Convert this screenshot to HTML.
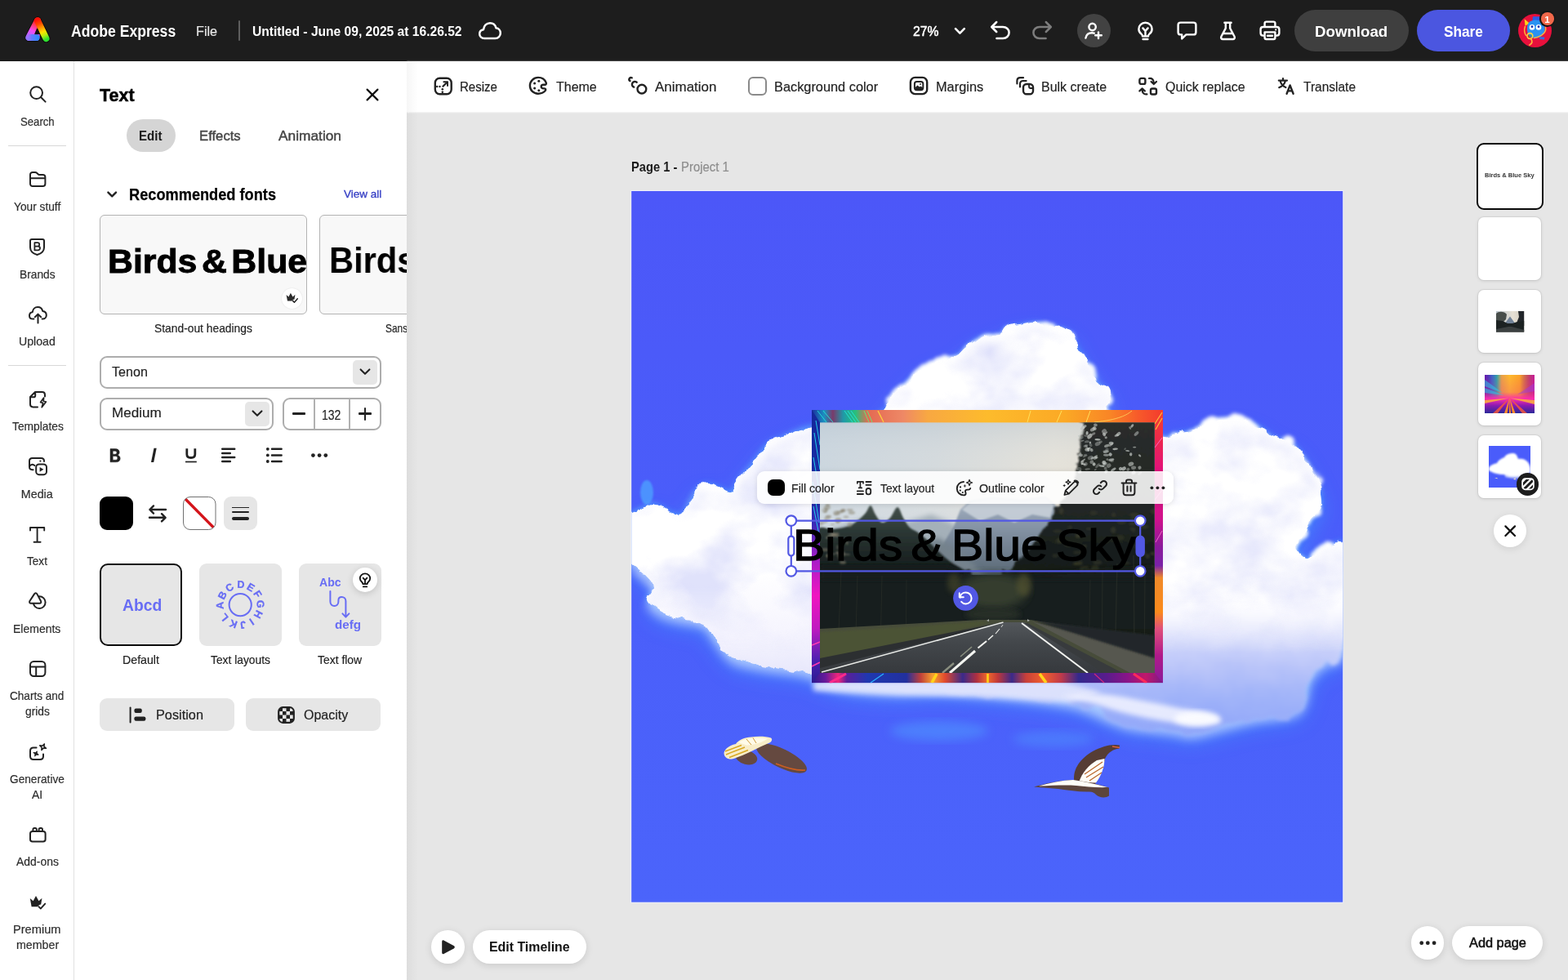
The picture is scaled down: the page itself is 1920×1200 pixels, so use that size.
<!DOCTYPE html>
<html lang="en">
<head>
<meta charset="utf-8">
<title>Adobe Express</title>
<style>
*{box-sizing:border-box;margin:0;padding:0}
html,body{width:1920px;height:1200px;overflow:hidden;background:#e6e6e6}
body{position:relative;font-family:"Liberation Sans",sans-serif;color:#222;-webkit-font-smoothing:antialiased}
#app{position:absolute;left:0;top:0;width:1920px;height:1200px;overflow:hidden;will-change:transform}
#app>div,#app>svg,#app>span,.abs{position:absolute}
.g{position:absolute;left:0;top:0;width:0;height:0;display:block}
.g>div,.g>svg,.g>span{position:absolute}
div div,div svg,div span{position:absolute}
.t{position:absolute;white-space:pre;transform-origin:0 50%;display:block}
svg{overflow:visible;display:block}
.ic{fill:none;stroke:#222;stroke-linecap:round;stroke-linejoin:round}
.icw{fill:none;stroke:#fff;stroke-linecap:round;stroke-linejoin:round}

</style>
</head>
<body>
<div id="app">
<div class="g backdrop">
<div style="left:0px;top:75px;width:91px;height:1125px;background:#fff;border-right:1px solid #e1e1e1"></div>
<div style="left:91px;top:75px;width:407px;height:1125px;background:#fff"></div>
</div>
<header class="g topbar">
<div style="left:0px;top:0px;width:1920px;height:75px;background:#1d1d1d"></div>
<svg style="left:0;top:0" width="80" height="75" viewBox="0 0 80 75">
<defs>
<linearGradient id="lgL" gradientUnits="userSpaceOnUse" x1="46" y1="24" x2="34" y2="48"><stop offset="0" stop-color="#ff1a12"/><stop offset="0.3" stop-color="#ff3a6a"/><stop offset="0.55" stop-color="#f64af0"/><stop offset="0.8" stop-color="#b866ff"/><stop offset="1" stop-color="#8f74ff"/></linearGradient>
<linearGradient id="lgBm" gradientUnits="userSpaceOnUse" x1="33" y1="46" x2="46" y2="46"><stop offset="0" stop-color="#a06cff"/><stop offset="0.45" stop-color="#5f7dff"/><stop offset="1" stop-color="#2a8cff"/></linearGradient>
<linearGradient id="lgR" gradientUnits="userSpaceOnUse" x1="46" y1="24" x2="57" y2="48"><stop offset="0" stop-color="#ff1208"/><stop offset="0.22" stop-color="#ff4a00"/><stop offset="0.42" stop-color="#ff9a00"/><stop offset="0.62" stop-color="#ffe000"/><stop offset="0.8" stop-color="#b8ee10"/><stop offset="1" stop-color="#2fe030"/></linearGradient>
</defs>
<g fill="none" stroke-linecap="round" stroke-linejoin="round">
<path d="M46 25.400 L35.400 46 L44.400 46 Z" stroke="#0c0c0c" stroke-width="10" fill="#0c0c0c"/>
<path d="M46 25.400 L56.400 47" stroke="#0c0c0c" stroke-width="10"/>
<path d="M46 25.400 L35.400 46 L44.400 46 Z" stroke="url(#lgL)" stroke-width="8.200" fill="url(#lgL)"/>
<path d="M36.400 46 L44.400 46" stroke="url(#lgBm2)" stroke-width="8.200"/>
<path d="M50.400 34.600 L56.400 47" stroke="#0c0c0c" stroke-width="9.800"/>
<path d="M46 25.400 L56.400 47" stroke="url(#lgR)" stroke-width="8.200"/>
</g>
<path d="M45.500 35 L42.700 41.600 L48.400 41.600 Z" fill="#101010" stroke="#101010" stroke-width="1" stroke-linejoin="round"/>
<defs><linearGradient id="lgBm2" gradientUnits="userSpaceOnUse" x1="33" y1="46" x2="47" y2="46"><stop offset="0" stop-color="#8f74ff" stop-opacity="0"/><stop offset="0.4" stop-color="#5f7dff" stop-opacity="0.9"/><stop offset="1" stop-color="#2a8cff"/></linearGradient></defs>
</svg>
<span class="t" style="left:86.70px;top:28.72px;font-size:19.5px;line-height:19.5px;font-weight:700;color:#fff;transform:scaleX(0.9028);">Adobe Express</span>
<span class="t" style="left:240.37px;top:29.91px;font-size:17.4px;line-height:17.4px;color:#e8e8e8;transform:scaleX(0.9298);-webkit-text-stroke:0.18px #e8e8e8;">File</span>
<div style="left:291.5px;top:25px;width:2px;height:25px;background:#5e5e5e;border-radius:1px"></div>
<span class="t" style="left:309.40px;top:30.80px;font-size:16px;line-height:16px;font-weight:700;color:#fff;transform:scaleX(0.9744);">Untitled - June 09, 2025 at 16.26.52</span>
<svg style="left:586px;top:26px;" width="28" height="23" viewBox="0 0 28 23"><path class="icw" d="M7.2 21 C3.6 21 1.2 18.6 1.2 15.6 C1.2 12.8 3.2 10.6 6 10.2 C6.4 5.4 9.8 2.2 14 2.2 C17.6 2.2 20.6 4.6 21.4 8.2 C24.6 8.6 26.8 11.2 26.8 14.4 C26.8 18 24 21 20.4 21 Z" stroke-width="2.5"/></svg>
<span class="t" style="left:1117.90px;top:30.80px;font-size:16px;line-height:16px;color:#fff;transform:scaleX(0.9844);-webkit-text-stroke:0.5px #fff;">27%</span>
<svg style="left:1168px;top:32.6px;" width="15" height="11" viewBox="0 0 15 11"><path class="icw" d="M2 2.2 L7.4 7.6 L12.8 2.2" stroke-width="2.6"/></svg>
<svg style="left:1212px;top:25px;" width="26" height="24" viewBox="0 0 26 24"><path class="icw" d="M8.2 2 L2.2 8 L8.2 14 M2.8 8 L16 8 C20.4 8 23.6 11 23.6 15 C23.6 19 20.4 22 16 22 L8.4 22" stroke-width="2.5"/></svg>
<svg style="left:1263px;top:25px;" width="26" height="24" viewBox="0 0 26 24"><path class="icw" d="M17.8 2 L23.8 8 L17.8 14 M23.2 8 L10 8 C5.6 8 2.4 11 2.4 15 C2.4 19 5.6 22 10 22 L17.6 22" style="stroke:#7d7d7d" stroke-width="2.5"/></svg>
<div style="left:1318.5px;top:17px;width:41px;height:41px;background:#424242;border-radius:50%"></div>
<svg style="left:1327px;top:26px;" width="24" height="24" viewBox="0 0 24 24"><circle stroke-width="2.4" class="icw" cx="10.6" cy="7" r="4.2"/><path stroke-width="2.4" class="icw" d="M2.4 20.6 C3.2 16.4 6.4 14.2 10 14.2 C11 14.2 12 14.4 12.8 14.7 M18 13.4 L18 21 M14.2 17.2 L21.8 17.2"/></svg>
<svg style="left:1392px;top:26px;" width="21" height="24" viewBox="0 0 21 24"><path stroke-width="2.4" class="icw" d="M10.5 1.8 C5.8 1.8 2.4 5.2 2.4 9.4 C2.4 12.2 3.8 14.2 5.6 15.6 C6.6 16.4 7 17.4 7 18.4 L14 18.4 C14 17.4 14.4 16.4 15.4 15.6 C17.2 14.2 18.6 12.2 18.6 9.4 C18.6 5.2 15.2 1.8 10.5 1.8 Z M7.6 22 L13.4 22 M7.4 8.4 L10.5 12 L13.6 8.4 M10.5 12 L10.5 18"/></svg>
<svg style="left:1441px;top:26px;" width="25" height="23" viewBox="0 0 25 23"><path stroke-width="2.4" class="icw" d="M4.6 1.6 L20.4 1.6 C22.2 1.6 23.4 2.8 23.4 4.6 L23.4 13.4 C23.4 15.2 22.2 16.4 20.4 16.4 L11.4 16.4 L6.2 21.4 L6.2 16.4 L4.6 16.4 C2.8 16.4 1.6 15.2 1.6 13.4 L1.6 4.6 C1.6 2.8 2.8 1.6 4.6 1.6 Z"/></svg>
<svg style="left:1493px;top:26px;" width="21" height="24" viewBox="0 0 21 24"><path stroke-width="2.4" class="icw" d="M6.4 1.8 L14.6 1.8 M7.8 2 L7.8 8.6 L2.4 18.8 C1.6 20.4 2.6 22 4.4 22 L16.6 22 C18.4 22 19.4 20.4 18.6 18.8 L13.2 8.6 L13.2 2 M5 15 L16 15"/></svg>
<svg style="left:1542px;top:25px;" width="26" height="25" viewBox="0 0 26 25"><path stroke-width="2.4" class="icw" d="M6.6 8 L6.6 3.6 C6.6 2.4 7.4 1.6 8.6 1.6 L17.4 1.6 C18.6 1.6 19.4 2.4 19.4 3.6 L19.4 8 M6.4 18.6 L4.6 18.6 C2.8 18.6 1.6 17.4 1.6 15.6 L1.6 11 C1.6 9.2 2.8 8 4.6 8 L21.4 8 C23.2 8 24.4 9.2 24.4 11 L24.4 15.6 C24.4 17.4 23.2 18.6 21.4 18.6 L19.6 18.6 M6.6 14.4 L19.4 14.4 L19.4 21 C19.4 22.2 18.6 23 17.4 23 L8.6 23 C7.4 23 6.6 22.2 6.6 21 Z M10 18.8 L16 18.8"/><circle cx="20.2" cy="11.4" r="1.1" fill="#fff"/></svg>
<div style="left:1585px;top:12px;width:139.5px;height:51px;background:#3f3f3f;border-radius:26px"></div>
<span class="t" style="left:1610.03px;top:29.18px;font-size:19.2px;line-height:19.2px;font-weight:700;color:#fff;transform:scaleX(0.9739);">Download</span>
<div style="left:1734.5px;top:12px;width:114.5px;height:51px;background:#4b56e0;border-radius:26px"></div>
<span class="t" style="left:1767.50px;top:29.18px;font-size:19.2px;line-height:19.2px;font-weight:700;color:#fff;transform:scaleX(0.8983);">Share</span>
<svg style="left:1859px;top:17px;" width="41" height="41" viewBox="0 0 41 41"><defs><clipPath id="avc"><circle cx="20.5" cy="20.5" r="20.5"/></clipPath></defs>
<g clip-path="url(#avc)"><rect width="41" height="41" fill="#e8103c"/>
<path d="M7.600 6.200 L13.800 11.600 L8.600 14.800 Z" fill="#ffd21a"/>
<path d="M18 3.200 L26 3.200 L26.600 8.600 L17.200 8.600 Z" fill="#2f5ae6"/>
<path d="M11.400 14 C12.400 9.400 16.400 7.400 21.500 7.400 C27 7.400 31.400 10.400 32.400 15.400 C33.400 21 31 26 26.400 28.600 C22 30.600 16 30 13.400 27 C10.800 23.800 10.600 18 11.400 14 Z" fill="#2a92f2"/>
<path d="M26 28 L32.400 28.400 L32 31.400 L26.400 31 Z" fill="#3a6ae0"/>
<circle cx="17" cy="16.400" r="3.300" fill="#fff"/><circle cx="25" cy="16.400" r="3.300" fill="#fff"/>
<circle cx="17" cy="15.700" r="1.400" fill="#1430b0"/><circle cx="25" cy="15.700" r="1.400" fill="#1430b0"/>
<path d="M8.400 15.400 C7.200 19 7.600 23.400 9.600 26.400 M33.600 16.600 C34.600 22 30 27.400 19.600 29.600" fill="none" stroke="#ffb43a" stroke-width="1.500" stroke-linecap="round"/>
<circle cx="14.400" cy="27" r="3.400" fill="none" stroke="#ffd83a" stroke-width="1.600"/>
<path d="M13.400 25.600 V28 M15.600 25.600 V28" stroke="#4a9a3a" stroke-width="1" fill="none"/>
<path d="M15.400 30.400 C18 33.400 17.200 36.400 14 38" fill="none" stroke="#ffb43a" stroke-width="1.800" stroke-linecap="round"/>
</g></svg>
<div style="left:1885.2px;top:13.4px;width:19.2px;height:19.2px;background:#151515;border-radius:50%"></div>
<div style="left:1887px;top:15.2px;width:15.6px;height:15.6px;background:#f2684a;border-radius:50%"></div>
<span class="t" style="left:1891.30px;top:17.84px;font-size:11.6px;line-height:11.6px;font-weight:700;color:#fff;">1</span>
</header>
<nav class="g rail">
<div style="left:10px;top:178px;width:71px;height:1px;background:#d8d8d8"></div>
<div style="left:10px;top:447px;width:71px;height:1px;background:#d8d8d8"></div>
<svg style="left:34.5px;top:104.2px;" width="23" height="23" viewBox="0 0 23 23"><circle class="ic" cx="9.6" cy="9.6" r="7.4" stroke-width="2"/><path class="ic" d="M15 15 L20.6 20.6" stroke-width="2"/></svg>
<span class="t" style="left:24.50px;top:141.84px;font-size:14.3px;line-height:14.3px;color:#2c2c2c;transform:scaleX(0.9196);-webkit-text-stroke:0.18px #2c2c2c;">Search</span>
<svg style="left:34.5px;top:208.6px;" width="23" height="21" viewBox="0 0 23 21"><path class="ic" d="M2 6.6 L2 5 C2 3.2 3.2 2 5 2 L8 2 C9 2 9.6 2.3 10.3 3 L11.6 4.3 C12 4.7 12.4 4.9 13 4.9 L17.4 4.9 C19.2 4.9 20.4 6.1 20.4 7.9 L20.4 16 C20.4 17.8 19.2 19 17.4 19 L5 19 C3.2 19 2 17.8 2 16 Z M2.2 9.2 L20.2 9.2" stroke-width="2"/></svg>
<span class="t" style="left:17.20px;top:246.10px;font-size:14.3px;line-height:14.3px;color:#2c2c2c;transform:scaleX(0.9599);-webkit-text-stroke:0.18px #2c2c2c;">Your stuff</span>
<svg style="left:35.4px;top:291.2px;" width="21" height="23" viewBox="0 0 21 23"><path class="ic" d="M4 2 L17 2 C18.4 2 19 2.6 19 4 L19 12 C19 16.4 15.6 19.6 10.5 21 C5.4 19.6 2 16.4 2 12 L2 4 C2 2.6 2.6 2 4 2 Z" stroke-width="2"/><path class="ic" d="M7.4 6.2 H11 A2.2 2.2 0 0 1 11 10.6 H7.4 M7.4 10.6 H11.6 A2.4 2.4 0 0 1 11.6 15.4 H7.4 Z M7.4 6.2 V15.4" stroke-width="1.8"/></svg>
<span class="t" style="left:23.54px;top:328.60px;font-size:14.3px;line-height:14.3px;color:#2c2c2c;transform:scaleX(0.9615);-webkit-text-stroke:0.18px #2c2c2c;">Brands</span>
<svg style="left:33.5px;top:373.6px;" width="25" height="23" viewBox="0 0 25 23"><path class="ic" d="M7.4 16.6 L6.6 16.6 C3.8 16.6 2 14.8 2 12.4 C2 10.2 3.6 8.5 5.8 8.2 C6.2 4.6 8.8 2 12.2 2 C15.2 2 17.6 4 18.3 7 C21 7.3 22.8 9.4 22.8 12 C22.8 14.6 20.8 16.6 18.2 16.6 L17.6 16.6 M12.5 21.4 L12.5 11 M8.8 14.2 L12.5 10.6 L16.2 14.2" stroke-width="2"/></svg>
<span class="t" style="left:22.51px;top:410.75px;font-size:14.3px;line-height:14.3px;color:#2c2c2c;transform:scaleX(0.9897);-webkit-text-stroke:0.18px #2c2c2c;">Upload</span>
<svg style="left:34.5px;top:477.6px;" width="24" height="23" viewBox="0 0 24 23"><path class="ic" d="M11 20.4 L5.4 20.4 C3.4 20.4 2 19 2 17 L2 8 L8 2 L16.6 2 C18.6 2 20 3.4 20 5.4 L20 7.6 M2.4 8.2 L6.4 8.2 C7.6 8.2 8.2 7.6 8.2 6.4 L8.2 2.4" stroke-width="2"/><path class="ic" d="M18.6 9 L14.6 14.6 L17.6 15.4 L16.2 20.6 L21.4 14 L18.2 13.2 Z" stroke-width="1.7"/></svg>
<span class="t" style="left:14.50px;top:514.85px;font-size:14.3px;line-height:14.3px;color:#2c2c2c;transform:scaleX(0.9645);-webkit-text-stroke:0.18px #2c2c2c;">Templates</span>
<svg style="left:33.5px;top:559.4px;" width="25" height="24" viewBox="0 0 25 24"><path class="ic" d="M6.6 16.2 L5.6 16.2 C3.4 16.2 2 14.8 2 12.6 L2 5.6 C2 3.4 3.4 2 5.6 2 L16.4 2 C18.6 2 20 3.4 20 5.6 L20 6 M2.4 11.6 C4.2 9.2 6.4 9 8.4 11" stroke-width="2"/><rect class="ic" x="10.2" y="9.4" width="12.8" height="12.8" rx="3.6" stroke-width="2"/><path d="M14.6 12.9 L19.4 15.8 L14.6 18.7 Z" fill="#222"/><circle cx="15.4" cy="5.6" r="1.1" fill="#222"/></svg>
<span class="t" style="left:25.80px;top:597.85px;font-size:14.3px;line-height:14.3px;color:#2c2c2c;-webkit-text-stroke:0.18px #2c2c2c;">Media</span>
<svg style="left:35px;top:643.5px;" width="21" height="22" viewBox="0 0 21 22"><path class="ic" d="M2 5.6 L2 2 L19.2 2 L19.2 5.6 M10.6 2.2 L10.6 19.6 M6.6 19.8 L14.6 19.8" stroke-width="1.9"/></svg>
<span class="t" style="left:33.25px;top:680.14px;font-size:14.3px;line-height:14.3px;color:#2c2c2c;transform:scaleX(0.9506);-webkit-text-stroke:0.18px #2c2c2c;">Text</span>
<svg style="left:33.5px;top:724.2px;" width="24" height="23" viewBox="0 0 24 23"><circle class="ic" cx="14.2" cy="13.6" r="7.4" stroke-width="2"/><path d="M8 3.4 C8.8 1.8 10.6 1.8 11.4 3.4 L16 12 C16.8 13.6 16 14.8 14.4 14.8 L4 14.8 C2.4 14.8 1.6 13.6 2.4 12 Z" fill="#fff" stroke="#222" stroke-width="2" stroke-linejoin="round"/></svg>
<span class="t" style="left:16.22px;top:763.10px;font-size:14.3px;line-height:14.3px;color:#2c2c2c;transform:scaleX(0.9795);-webkit-text-stroke:0.18px #2c2c2c;">Elements</span>
<svg style="left:34.5px;top:808px;" width="23" height="22" viewBox="0 0 23 22"><rect class="ic" x="2" y="2" width="18.4" height="18" rx="4.4" stroke-width="2"/><path class="ic" d="M2.2 8.6 L20.2 8.6 M9.2 8.8 L9.2 19.8" stroke-width="2"/></svg>
<span class="t" style="left:12.25px;top:845.35px;font-size:14.3px;line-height:14.3px;color:#2c2c2c;transform:scaleX(0.9495);-webkit-text-stroke:0.18px #2c2c2c;">Charts and</span>
<span class="t" style="left:30.70px;top:863.85px;font-size:14.3px;line-height:14.3px;color:#2c2c2c;transform:scaleX(0.9663);-webkit-text-stroke:0.18px #2c2c2c;">grids</span>
<svg style="left:34.5px;top:908.5px;" width="24" height="23" viewBox="0 0 24 23"><path class="ic" d="M9.6 6.4 L6 6.4 C3.6 6.4 2 8 2 10.4 L2 17 C2 19.4 3.6 21 6 21 L14 21 C16.4 21 18 19.4 18 17 L18 14.4" stroke-width="2"/><path class="ic" d="M17.600 1.600 L18.600 4.600 L21.800 5.600 L18.600 6.800 L17.600 9.800 L16.400 6.800 L13.400 5.600 L16.400 4.600 Z" stroke-width="1.600" transform="rotate(24 17.600 5.700)"/><path d="M9 10.600 L9.900 13 L12.400 13.800 L9.900 14.700 L9 17.200 L8.100 14.700 L5.600 13.800 L8.100 13 Z" fill="#222" stroke="#222" stroke-width="0.900" stroke-linejoin="round" transform="rotate(24 9 13.900)"/></svg>
<span class="t" style="left:12.00px;top:947.35px;font-size:14.3px;line-height:14.3px;color:#2c2c2c;transform:scaleX(0.9567);-webkit-text-stroke:0.18px #2c2c2c;">Generative</span>
<span class="t" style="left:39.25px;top:965.85px;font-size:14.3px;line-height:14.3px;color:#2c2c2c;transform:scaleX(0.9772);-webkit-text-stroke:0.18px #2c2c2c;">AI</span>
<svg style="left:34.5px;top:1012.2px;" width="23" height="21" viewBox="0 0 23 21"><path class="ic" d="M5.4 6 L5.4 3.8 C5.4 2.6 6 2 7.2 2 L8 2 C9.2 2 9.8 2.6 9.8 3.8 L9.8 6 M12.6 6 L12.6 3.8 C12.6 2.6 13.2 2 14.4 2 L15.2 2 C16.4 2 17 2.6 17 3.8 L17 6" stroke-width="1.9"/><rect class="ic" x="2" y="6" width="18.6" height="12.6" rx="2.8" stroke-width="2"/></svg>
<span class="t" style="left:19.75px;top:1048.35px;font-size:14.3px;line-height:14.3px;color:#2c2c2c;transform:scaleX(0.9736);-webkit-text-stroke:0.18px #2c2c2c;">Add-ons</span>
<svg style="left:36px;top:1096px;" width="21" height="19" viewBox="0 0 21 19"><path d="M0.800 4 L4.600 7.200 L8 1 L11.500 7.200 L15.400 3.800 L14.200 11.600 C12.200 11.900 10.800 12.900 10.200 14.300 H2.600 Z" fill="#222"/><path class="ic" d="M11.400 14.200 L13.800 16.600 L19.200 10.600" stroke-width="1.900"/></svg>
<span class="t" style="left:16.18px;top:1130.85px;font-size:14.3px;line-height:14.3px;color:#2c2c2c;transform:scaleX(1.0220);-webkit-text-stroke:0.18px #2c2c2c;">Premium</span>
<span class="t" style="left:19.50px;top:1149.60px;font-size:14.3px;line-height:14.3px;color:#2c2c2c;transform:scaleX(0.9948);-webkit-text-stroke:0.18px #2c2c2c;">member</span>
</nav>
<aside class="g text-panel">
<span class="t" style="left:122.30px;top:106.71px;font-size:21.4px;line-height:21.4px;font-weight:700;color:#000;transform:scaleX(1.0031);-webkit-text-stroke:0.5px #000;">Text</span>
<svg style="left:448px;top:107.5px;" width="16" height="16" viewBox="0 0 16 16"><path class="ic" d="M1.6 1.6 L14.4 14.4 M14.4 1.6 L1.6 14.4" stroke-width="2.2" style="stroke:#111"/></svg>
<div style="left:155px;top:146.3px;width:59.5px;height:40px;background:#d5d5d5;border-radius:20px"></div>
<span class="t" style="left:170.09px;top:159.19px;font-size:16.6px;line-height:16.6px;font-weight:700;color:#1a1a1a;transform:scaleX(0.9087);">Edit</span>
<span class="t" style="left:244.29px;top:159.19px;font-size:16.6px;line-height:16.6px;color:#464646;transform:scaleX(1.0056);-webkit-text-stroke:0.45px #464646;">Effects</span>
<span class="t" style="left:341.25px;top:159.19px;font-size:16.6px;line-height:16.6px;color:#464646;transform:scaleX(1.0434);-webkit-text-stroke:0.45px #464646;">Animation</span>
<svg style="left:130px;top:232.6px;" width="15" height="11" viewBox="0 0 15 11"><path class="ic" d="M2.4 2.6 L7.2 7.400 L12 2.600" stroke-width="2.4"/></svg>
<span class="t" style="left:157.67px;top:228.84px;font-size:19.6px;line-height:19.6px;font-weight:700;color:#000;transform:scaleX(0.9290);-webkit-text-stroke:0.25px #000;">Recommended fonts</span>
<span class="t" style="left:421.00px;top:231.29px;font-size:13.3px;line-height:13.3px;color:#3b44c6;transform:scaleX(1.0126);-webkit-text-stroke:0.35px #3b44c6;">View all</span>
<div style="left:122px;top:263px;width:254px;height:122px;background:#f8f8f8;border-radius:6px"></div>
<span class="t" style="left:132.49px;top:300.07px;font-size:40.5px;line-height:40.5px;font-weight:700;color:#000;transform:scaleX(1.0564);-webkit-text-stroke:0.9px #000;word-spacing:-6px;">Birds &amp; Blue Sky</span>
<div style="left:376px;top:263px;width:15.5px;height:122px;background:#fff"></div>
<div style="left:122px;top:263px;width:254px;height:122px;border:1px solid #b3b3b3;border-radius:6px"></div>
<div style="left:344.5px;top:353px;width:25px;height:25px;background:#fff;border-radius:50%;box-shadow:0 0 2px rgba(0,0,0,0.12)"></div>
<svg style="left:349.5px;top:358.4px;" width="16" height="14" viewBox="0 0 16 14"><path d="M0.600 3 L3.400 5.400 L5.900 0.800 L8.500 5.400 L11.400 2.800 L10.500 8.600 C9 8.800 8 9.600 7.600 10.600 H2 Z" fill="#2c2c2c"/><path class="ic" d="M8.600 10.400 L10.400 12.200 L14.300 7.800" stroke-width="1.500"/></svg>
<div style="left:391px;top:263px;width:254px;height:122px;background:#f8f8f8;border:1px solid #b3b3b3;border-radius:6px"></div>
<span class="t" style="left:403.32px;top:297.05px;font-size:44.3px;line-height:44.3px;font-weight:700;color:#000;transform:scaleX(0.9398);">Birds &amp; Blue Sky</span>
<span class="t" style="left:189.00px;top:395.35px;font-size:14.3px;line-height:14.3px;transform:scaleX(0.9669);-webkit-text-stroke:0.18px #222;">Stand-out headings</span>
<span class="t" style="left:472.00px;top:395.35px;font-size:14.3px;line-height:14.3px;transform:scaleX(0.8323);-webkit-text-stroke:0.18px #222;">Sans-serif body</span>
<div style="left:122px;top:436px;width:345px;height:40px;border:2.2px solid #adadad;border-radius:9px;background:#fff"></div>
<span class="t" style="left:137.20px;top:446.86px;font-size:16.4px;line-height:16.4px;transform:scaleX(0.9834);-webkit-text-stroke:0.18px #222;">Tenon</span>
<div style="left:432px;top:441px;width:30px;height:30px;background:#e6e6e6;border-radius:5px"></div>
<svg style="left:440px;top:450px;" width="14" height="11" viewBox="0 0 14 11"><path class="ic" d="M1.6 2.4 L7 7.8 L12.4 2.4" stroke-width="2.1"/></svg>
<div style="left:122px;top:486.5px;width:213px;height:40px;border:2.2px solid #adadad;border-radius:9px;background:#fff"></div>
<span class="t" style="left:136.86px;top:497.46px;font-size:16.4px;line-height:16.4px;transform:scaleX(1.0434);-webkit-text-stroke:0.18px #222;">Medium</span>
<div style="left:300px;top:491.5px;width:30px;height:30px;background:#e6e6e6;border-radius:5px"></div>
<svg style="left:308px;top:500.5px;" width="14" height="11" viewBox="0 0 14 11"><path class="ic" d="M1.6 2.4 L7 7.8 L12.4 2.4" stroke-width="2.1"/></svg>
<div style="left:345.5px;top:486.5px;width:121.5px;height:40px;border:2.2px solid #adadad;border-radius:9px;background:#fff"></div>
<div style="left:384px;top:488px;width:2px;height:37px;background:#b1b1b1"></div>
<div style="left:426.8px;top:488px;width:2px;height:37px;background:#b1b1b1"></div>
<div style="left:357.8px;top:505.4px;width:16px;height:2.2px;background:#222;border-radius:1px"></div>
<span class="t" style="left:394.09px;top:500.28px;font-size:17.2px;line-height:17.2px;transform:scaleX(0.8150);-webkit-text-stroke:0.18px #222;">132</span>
<div style="left:439.3px;top:505.4px;width:16px;height:2.2px;background:#222;border-radius:1px"></div>
<div style="left:446.2px;top:498.5px;width:2.2px;height:16px;background:#222;border-radius:1px"></div>
<svg style="left:133px;top:548px;" width="17" height="19" viewBox="0 0 17 19"><path d="M2 1.6 H8.2 C11.4 1.6 13.2 3.2 13.2 5.8 C13.2 7.6 12.2 8.8 10.8 9.3 C12.8 9.7 14.2 11.2 14.2 13.4 C14.2 16.2 12.2 17.8 8.8 17.8 H2 Z M5.2 4.2 V8.2 H7.8 C9.2 8.2 10 7.5 10 6.2 C10 4.9 9.2 4.2 7.8 4.2 Z M5.2 10.6 V15.2 H8.4 C10 15.2 10.9 14.4 10.9 12.9 C10.9 11.4 10 10.6 8.4 10.6 Z" fill="#222" fill-rule="evenodd" stroke="#222" stroke-width="0.5" stroke-linejoin="round"/></svg>
<svg style="left:184px;top:548px;" width="9" height="19" viewBox="0 0 9 19"><path d="M4.500 0.800 H7.700 L4.200 18 H1 Z" fill="#222"/></svg>
<svg style="left:226px;top:548px;" width="16" height="19" viewBox="0 0 16 19"><path class="ic" d="M2.8 1.2 V8.2 C2.8 10.900 4.700 12.500 7.800 12.500 C10.900 12.500 12.800 10.900 12.800 8.200 V1.200" stroke-width="2.8" style="stroke-linecap:butt"/><path d="M1 17.500 H14.800" stroke="#222" stroke-width="1.700" fill="none"/></svg>
<svg style="left:270px;top:548px;" width="19" height="19" viewBox="0 0 19 19"><path class="ic" d="M2.200 1.800 H17.200 M2.200 6.900 H11.800 M2.200 12 H17.200 M2.200 17 H11.800" stroke-width="2.500"/></svg>
<svg style="left:325px;top:548px;" width="22" height="19" viewBox="0 0 22 19"><path class="ic" d="M8 1.800 H19.600 M8 9.400 H19.600 M8 17 H19.600" stroke-width="2.500"/><circle cx="2.800" cy="1.800" r="1.900" fill="#222"/><circle cx="2.800" cy="9.400" r="1.900" fill="#222"/><circle cx="2.800" cy="17" r="1.900" fill="#222"/></svg>
<svg style="left:381px;top:555px;" width="21" height="5" viewBox="0 0 21 5"><circle cx="2.400" cy="2.600" r="2.400" fill="#222"/><circle cx="10.100" cy="2.600" r="2.400" fill="#222"/><circle cx="17.800" cy="2.600" r="2.400" fill="#222"/></svg>
<div style="left:122px;top:608px;width:40.5px;height:41px;background:#000;border-radius:9px"></div>
<svg style="left:181px;top:617px;" width="24" height="23" viewBox="0 0 24 23"><path class="ic" d="M22 7 H2.6 M7 2.4 L2.4 7 L7 11.6 M2 16.8 H21.4 M17 12.2 L21.6 16.8 L17 21.4" stroke-width="2.4"/></svg>
<svg style="left:223.5px;top:608px;" width="40.5" height="41" viewBox="0 0 40.5 41"><defs><clipPath id="ncc"><rect x="0.5" y="0.5" width="39.5" height="40" rx="8.5"/></clipPath></defs><rect x="0.5" y="0.5" width="39.5" height="40" rx="8.5" fill="#fff"/><path d="M1.5 1.5 L39 39.5" stroke="#d4141a" stroke-width="3.4" clip-path="url(#ncc)"/><rect x="0.5" y="0.5" width="39.5" height="40" rx="8.5" fill="none" stroke="#707070" stroke-width="1"/></svg>
<div style="left:274.3px;top:608px;width:40.5px;height:41px;background:#e6e6e6;border-radius:9px"></div>
<div style="left:284.4px;top:621.4px;width:20.2px;height:1.1px;background:#222"></div>
<div style="left:284.4px;top:626.3px;width:20.2px;height:2.1px;background:#222;border-radius:1px"></div>
<div style="left:284.4px;top:633px;width:20.2px;height:4.2px;background:#222;border-radius:2.1px"></div>
<div style="left:122px;top:689.5px;width:101.2px;height:101px;background:#e6e6e6;border:2.7px solid #0d0d0d;border-radius:10px"></div>
<span class="t" style="left:149.50px;top:729.95px;font-size:21px;line-height:21px;font-weight:700;color:#686df4;transform:scaleX(0.9212);">Abcd</span>
<div style="left:244.2px;top:689.5px;width:101px;height:101px;background:#e6e6e6;border-radius:9px"></div>
<svg style="left:244.2px;top:689.5px;" width="101" height="101" viewBox="0 0 101 101"><circle cx="50.2" cy="50.6" r="13.6" fill="none" stroke="#686df4" stroke-width="2"/><text transform="translate(50.2,50.6) rotate(2) translate(0,-20.6)" text-anchor="middle" style="font:700 12.6px 'Liberation Sans',sans-serif" fill="#686df4" stroke="#686df4" stroke-width="0.3">D</text><text transform="translate(50.2,50.6) rotate(31) translate(0,-20.6)" text-anchor="middle" style="font:700 12.6px 'Liberation Sans',sans-serif" fill="#686df4" stroke="#686df4" stroke-width="0.3">E</text><text transform="translate(50.2,50.6) rotate(58) translate(0,-20.6)" text-anchor="middle" style="font:700 12.6px 'Liberation Sans',sans-serif" fill="#686df4" stroke="#686df4" stroke-width="0.3">F</text><text transform="translate(50.2,50.6) rotate(88) translate(0,-20.6)" text-anchor="middle" style="font:700 12.6px 'Liberation Sans',sans-serif" fill="#686df4" stroke="#686df4" stroke-width="0.3">G</text><text transform="translate(50.2,50.6) rotate(118) translate(0,-20.6)" text-anchor="middle" style="font:700 12.6px 'Liberation Sans',sans-serif" fill="#686df4" stroke="#686df4" stroke-width="0.3">H</text><text transform="translate(50.2,50.6) rotate(146) translate(0,-20.6)" text-anchor="middle" style="font:700 12.6px 'Liberation Sans',sans-serif" fill="#686df4" stroke="#686df4" stroke-width="0.3">I</text><text transform="translate(50.2,50.6) rotate(172) translate(0,-20.6)" text-anchor="middle" style="font:700 12.6px 'Liberation Sans',sans-serif" fill="#686df4" stroke="#686df4" stroke-width="0.3">J</text><text transform="translate(50.2,50.6) rotate(200) translate(0,-20.6)" text-anchor="middle" style="font:700 12.6px 'Liberation Sans',sans-serif" fill="#686df4" stroke="#686df4" stroke-width="0.3">K</text><text transform="translate(50.2,50.6) rotate(232) translate(0,-20.6)" text-anchor="middle" style="font:700 12.6px 'Liberation Sans',sans-serif" fill="#686df4" stroke="#686df4" stroke-width="0.3">L</text><text transform="translate(50.2,50.6) rotate(268) translate(0,-20.6)" text-anchor="middle" style="font:700 12.6px 'Liberation Sans',sans-serif" fill="#686df4" stroke="#686df4" stroke-width="0.3">A</text><text transform="translate(50.2,50.6) rotate(298) translate(0,-20.6)" text-anchor="middle" style="font:700 12.6px 'Liberation Sans',sans-serif" fill="#686df4" stroke="#686df4" stroke-width="0.3">B</text><text transform="translate(50.2,50.6) rotate(328) translate(0,-20.6)" text-anchor="middle" style="font:700 12.6px 'Liberation Sans',sans-serif" fill="#686df4" stroke="#686df4" stroke-width="0.3">C</text></svg>
<div style="left:365.8px;top:689.5px;width:101.2px;height:101px;background:#e6e6e6;border-radius:9px"></div>
<span class="t" style="left:391.40px;top:705.21px;font-size:15.4px;line-height:15.4px;font-weight:700;color:#686df4;transform:scaleX(0.9114);">Abc</span>
<span class="t" style="left:410.30px;top:756.91px;font-size:15.4px;line-height:15.4px;font-weight:700;color:#686df4;transform:scaleX(0.9849);">defg</span>
<svg style="left:400px;top:720px;" width="30" height="40" viewBox="0 0 30 40"><path d="M4.4 4 V16.6 C4.4 20 6.6 22 9.4 22 C12.2 22 14.4 20 14.4 16.6 V15 C14.4 12.6 16 11 18.4 11 C21 11 23.4 12.8 23.4 16 V34.6 M19.4 31.4 L23.4 35.6 L27.4 31.4" fill="none" stroke="#686df4" stroke-width="2" stroke-linecap="round" stroke-linejoin="round"/></svg>
<div style="left:431.5px;top:694.5px;width:30.8px;height:30.8px;background:#fff;border-radius:50%;box-shadow:0 2px 8px rgba(0,0,0,0.16)"></div>
<svg style="left:439px;top:700.5px;" width="16" height="20" viewBox="0 0 16 20"><path class="ic" d="M8 1.4 C4.4 1.4 1.8 4 1.8 7.2 C1.8 9.4 2.9 10.9 4.3 12 C5 12.6 5.4 13.4 5.4 14.2 L10.6 14.2 C10.6 13.4 11 12.6 11.7 12 C13.1 10.9 14.2 9.4 14.2 7.2 C14.2 4 11.6 1.4 8 1.4 Z M5.8 17.4 L10.2 17.4 M5.6 6.6 L8 9.4 L10.4 6.6 M8 9.4 L8 14" stroke-width="1.8" style="stroke:#111"/></svg>
<span class="t" style="left:149.93px;top:800.69px;font-size:14.6px;line-height:14.6px;transform:scaleX(0.9716);-webkit-text-stroke:0.18px #222;">Default</span>
<span class="t" style="left:258.40px;top:800.69px;font-size:14.6px;line-height:14.6px;transform:scaleX(0.9458);-webkit-text-stroke:0.18px #222;">Text layouts</span>
<span class="t" style="left:389.40px;top:800.69px;font-size:14.6px;line-height:14.6px;transform:scaleX(0.9540);-webkit-text-stroke:0.18px #222;">Text flow</span>
<div style="left:122px;top:854.8px;width:165px;height:40.2px;background:#e6e6e6;border-radius:9px"></div>
<svg style="left:158px;top:865px;" width="21" height="21" viewBox="0 0 21 21"><path class="ic" d="M1.6 1.4 V19.6" stroke-width="2"/><rect x="6.4" y="2.6" width="9.4" height="5.4" rx="2.2" fill="#222"/><rect x="6.4" y="12.4" width="14" height="5.4" rx="2.2" fill="#222"/></svg>
<span class="t" style="left:190.64px;top:866.85px;font-size:17px;line-height:17px;transform:scaleX(0.9589);-webkit-text-stroke:0.18px #222;">Position</span>
<div style="left:301.3px;top:854.8px;width:165px;height:40.2px;background:#e6e6e6;border-radius:9px"></div>
<svg style="left:339.6px;top:864.8px;" width="21" height="21" viewBox="0 0 21 21"><defs><clipPath id="opc"><rect x="1" y="1" width="19" height="19" rx="5"/></clipPath></defs><g clip-path="url(#opc)"><rect x="1.5" y="1.5" width="4.5" height="4.5" fill="#222"/><rect x="1.5" y="10.5" width="4.5" height="4.5" fill="#222"/><rect x="6.0" y="6.0" width="4.5" height="4.5" fill="#222"/><rect x="6.0" y="15.0" width="4.5" height="4.5" fill="#222"/><rect x="10.5" y="1.5" width="4.5" height="4.5" fill="#222"/><rect x="10.5" y="10.5" width="4.5" height="4.5" fill="#222"/><rect x="15.0" y="6.0" width="4.5" height="4.5" fill="#222"/><rect x="15.0" y="15.0" width="4.5" height="4.5" fill="#222"/></g><rect class="ic" x="1.2" y="1.2" width="18.6" height="18.6" rx="5" stroke-width="2.2"/></svg>
<span class="t" style="left:372.00px;top:866.85px;font-size:17px;line-height:17px;transform:scaleX(0.9392);-webkit-text-stroke:0.18px #222;">Opacity</span>
</aside>
<section class="g canvas-toolbar">
<div style="left:498px;top:75px;width:1422px;height:1125px;background:linear-gradient(90deg,#dddddd 0,#e6e6e6 14px)"></div>
<div style="left:498px;top:75px;width:1422px;height:62px;background:linear-gradient(90deg,#f6f6f6 0,#fff 14px);box-shadow:0 0.5px 1.5px 0.5px rgba(255,255,255,0.8)"></div>
<svg style="left:530.5px;top:93.5px;" width="23.5" height="23" viewBox="0 0 23.5 23"><rect class="ic" x="1.8" y="1.7" width="19.9" height="19.5" rx="5.6" stroke-width="2.4"/><path class="ic" d="M11.4 11.8 L16 7.2" stroke-width="2.2"/><path d="M11.6 5.3 H17.2 C17.7 5.3 18 5.6 18 6.100 V11.700 L16.100 11.700 L16.100 8.600 L16.100 7.200 L11.600 7.200 Z" fill="#222"/><circle cx="4.2" cy="12" r="1.200" fill="#222"/><circle cx="7.5" cy="12" r="1.200" fill="#222"/><circle cx="10.800" cy="15.300" r="1.300" fill="#222"/><circle cx="10.800" cy="18.800" r="1.300" fill="#222"/></svg>
<span class="t" style="left:563.38px;top:97.84px;font-size:16.3px;line-height:16.3px;transform:scaleX(0.9238);-webkit-text-stroke:0.18px #222;">Resize</span>
<svg style="left:647px;top:93.2px;" width="24" height="24" viewBox="0 0 24 24"><path class="ic" d="M12 1.900 C6.400 1.900 1.900 6.300 1.900 11.900 C1.900 17.500 6.300 21.700 11.900 21.700 C15.400 21.700 18.700 20.300 20.700 18 C21.700 16.800 21.100 15.400 19.700 15.400 L18.500 15.400 C16.700 15.400 15.700 14.400 15.700 13 C15.700 11.600 16.700 10.700 18.300 10.700 L20.100 10.700 C21.500 10.700 22.300 9.700 21.700 8.300 C20.300 4.500 16.600 1.900 12 1.900 Z" stroke-width="2.4"/><circle cx="7.6" cy="8.900" r="1.500" fill="#222"/><circle cx="12.800" cy="6.200" r="1.500" fill="#222"/><circle cx="7.600" cy="15" r="1.500" fill="#222"/><circle cx="12.800" cy="17.800" r="1.500" fill="#222"/></svg>
<span class="t" style="left:681.00px;top:97.84px;font-size:16.3px;line-height:16.3px;transform:scaleX(0.9819);-webkit-text-stroke:0.18px #222;">Theme</span>
<svg style="left:767.5px;top:93px;" width="25" height="24" viewBox="0 0 25 24"><circle class="ic" cx="17.9" cy="16.100" r="5.400" stroke-width="2.4"/><path class="ic" d="M8.20 13.69 A3.5 3.5 0 1 1 11.65 7.72" stroke-width="2.4"/><path class="ic" d="M3.50 6.11 A2.2 2.2 0 0 1 5.70 2.29" stroke-width="2.4"/></svg>
<span class="t" style="left:802.30px;top:97.84px;font-size:16.3px;line-height:16.3px;transform:scaleX(1.0428);-webkit-text-stroke:0.18px #222;">Animation</span>
<div style="left:915.5px;top:94px;width:23px;height:23px;border:2px solid #8a8a8a;border-radius:6px;background:#fff"></div>
<span class="t" style="left:948.00px;top:97.84px;font-size:16.3px;line-height:16.3px;transform:scaleX(1.0033);-webkit-text-stroke:0.18px #222;">Background color</span>
<svg style="left:1113px;top:93.2px;" width="24" height="24" viewBox="0 0 24 24"><rect class="ic" x="1.9" y="1.900" width="20.300" height="20.200" rx="5.600" stroke-width="2.4"/><rect class="ic" x="6.900" y="7" width="10.400" height="10.200" rx="2.600" stroke-width="2"/><path d="M7.200 14.400 L10.400 11.600 L13 13.600 L14.400 12.600 L17 14.600 V15.600 C17 16.400 16.400 17 15.600 17 H8.600 C7.800 17 7.200 16.400 7.200 15.600 Z" fill="#222"/><circle cx="14" cy="10" r="0.900" fill="#222"/></svg>
<span class="t" style="left:1146.30px;top:97.84px;font-size:16.3px;line-height:16.3px;transform:scaleX(1.0041);-webkit-text-stroke:0.18px #222;">Margins</span>
<svg style="left:1242.5px;top:93px;" width="24" height="24" viewBox="0 0 24 24"><path class="ic" d="M2.400 9.400 V6 C2.400 3.600 3.800 2.200 6.200 2.200 H10" stroke-width="2.2"/><path class="ic" d="M6 13.400 V9.800 C6 7.400 7.400 6 9.800 6 H13.600" stroke-width="2.200"/><rect class="ic" x="10" y="10" width="12" height="12.200" rx="4" stroke-width="2.4"/><path class="ic" d="M17 10.800 V13 C17 14.200 17.800 15 19 15 H21.400" stroke-width="1.800"/></svg>
<span class="t" style="left:1275.02px;top:97.84px;font-size:16.3px;line-height:16.3px;transform:scaleX(0.9827);-webkit-text-stroke:0.18px #222;">Bulk create</span>
<svg style="left:1392.5px;top:93px;" width="25" height="24" viewBox="0 0 25 24"><rect class="ic" x="2.400" y="2.900" width="7" height="7" rx="2" stroke-width="2.4"/><rect class="ic" x="16" y="15.500" width="7" height="7" rx="2" stroke-width="2.4"/><path class="ic" d="M14 3 C17.600 2.600 19.800 4.600 19.800 8.400 M16.600 7 L19.800 10 L23 7" stroke-width="2.200"/><path class="ic" d="M11.400 22.400 C7.800 22.800 5.600 20.800 5.600 17 M2.400 18.400 L5.600 15.400 L8.800 18.400" stroke-width="2.200"/></svg>
<span class="t" style="left:1426.70px;top:97.84px;font-size:16.3px;line-height:16.3px;transform:scaleX(0.9811);-webkit-text-stroke:0.18px #222;">Quick replace</span>
<svg style="left:1563.5px;top:94px;" width="22" height="22" viewBox="0 0 22 22"><path class="ic" d="M1.800 4.600 H12 M7 2 V4.600 M10 4.800 C9.200 8.400 6.400 11.600 2.200 13.200 M4 6.400 C5 9.200 7.400 11.800 10.400 13" stroke-width="2.200"/><path class="ic" d="M11.600 20.800 L15.600 10.400 L19.600 20.800 M13 17.400 H18.200" stroke-width="2.400"/></svg>
<span class="t" style="left:1596.00px;top:97.84px;font-size:16.3px;line-height:16.3px;transform:scaleX(0.9523);-webkit-text-stroke:0.18px #222;">Translate</span>
</section>
<main class="g artboard">
<span class="t" style="left:773.09px;top:196.03px;font-size:16.2px;line-height:16.2px;font-weight:700;color:#1a1a1a;transform:scaleX(0.9063);">Page 1 -</span>
<span class="t" style="left:833.88px;top:196.03px;font-size:16.2px;line-height:16.2px;color:#8c8c8c;transform:scaleX(0.9192);-webkit-text-stroke:0.18px #8c8c8c;">Project 1</span>
<svg style="left:0;top:0" width="1920" height="1200" viewBox="0 0 1920 1200"><defs>
<linearGradient id="sky" x1="0" y1="0" x2="0" y2="1"><stop offset="0" stop-color="#4c57f8"/><stop offset="0.45" stop-color="#4a5dfa"/><stop offset="1" stop-color="#4b64fb"/></linearGradient>
<filter id="rough" x="-3%" y="-3%" width="106%" height="106%" color-interpolation-filters="sRGB">
<feTurbulence type="fractalNoise" baseFrequency="0.045" numOctaves="4" seed="7" result="n"/>
<feDisplacementMap in="SourceGraphic" in2="n" scale="13" xChannelSelector="R" yChannelSelector="G" result="d"/>
<feGaussianBlur in="d" stdDeviation="0.7"/>
</filter>
<filter id="rough2" x="-3%" y="-3%" width="106%" height="106%" color-interpolation-filters="sRGB">
<feTurbulence type="fractalNoise" baseFrequency="0.03" numOctaves="4" seed="11" result="n"/>
<feDisplacementMap in="SourceGraphic" in2="n" scale="22" xChannelSelector="R" yChannelSelector="G" result="d"/>
<feGaussianBlur in="d" stdDeviation="2"/>
</filter>
<filter id="b6" x="-20%" y="-20%" width="140%" height="140%"><feGaussianBlur stdDeviation="6"/></filter>
<filter id="b12" x="-30%" y="-30%" width="160%" height="160%"><feGaussianBlur stdDeviation="12"/></filter>
<filter id="b20" x="-40%" y="-40%" width="180%" height="180%"><feGaussianBlur stdDeviation="20"/></filter>
<filter id="b3" x="-20%" y="-20%" width="140%" height="140%"><feGaussianBlur stdDeviation="3"/></filter>
<filter id="b1" x="-10%" y="-10%" width="120%" height="120%"><feGaussianBlur stdDeviation="1.2"/></filter>
<filter id="bs" x="-10%" y="-10%" width="120%" height="120%"><feGaussianBlur stdDeviation="0.6"/></filter>
<filter id="roughS" x="-5%" y="-5%" width="110%" height="110%"><feTurbulence type="fractalNoise" baseFrequency="0.12" numOctaves="3" seed="3" result="n"/><feDisplacementMap in="SourceGraphic" in2="n" scale="9" xChannelSelector="R" yChannelSelector="G" result="d"/><feGaussianBlur in="d" stdDeviation="0.8"/></filter>
<filter id="tex" x="0" y="0" width="100%" height="100%" color-interpolation-filters="sRGB">
<feTurbulence type="fractalNoise" baseFrequency="0.16 0.12" numOctaves="3" seed="4" result="n"/>
<feColorMatrix in="n" type="matrix" values="0 0 0 0 0  0 0 0 0 0  0 0 0 0 0  2.6 2.6 0 0 -2.35" result="na"/>
<feComposite in="SourceGraphic" in2="na" operator="in"/>
<feGaussianBlur stdDeviation="0.5"/>
</filter>
<filter id="ctex" x="0" y="0" width="100%" height="100%" color-interpolation-filters="sRGB">
<feTurbulence type="fractalNoise" baseFrequency="0.012 0.016" numOctaves="4" seed="21" result="n"/>
<feColorMatrix in="n" type="matrix" values="0 0 0 0 0.84  0 0 0 0 0.85  0 0 0 0 0.98  1.9 1.2 0 0 -1.28" result="na"/>
<feComposite in="na" in2="SourceGraphic" operator="in"/>
</filter>
<linearGradient id="shade" x1="0" y1="700" x2="0" y2="900" gradientUnits="userSpaceOnUse"><stop offset="0" stop-color="#fff"/><stop offset="0.22" stop-color="#f4f4fe"/><stop offset="0.4" stop-color="#d6dbfb"/><stop offset="0.58" stop-color="#b9c4f9"/><stop offset="0.78" stop-color="#a0b3f9"/><stop offset="1" stop-color="#8ea4f9"/></linearGradient>
<linearGradient id="shadeL" x1="0" y1="700" x2="0" y2="830" gradientUnits="userSpaceOnUse"><stop offset="0" stop-color="#fff"/><stop offset="0.6" stop-color="#f5f4fe"/><stop offset="1" stop-color="#e6e6fb"/></linearGradient>
<clipPath id="art"><rect x="773.2" y="234" width="871" height="870.7"/></clipPath>
<clipPath id="leftHalf"><rect x="760" y="233" width="234" height="872"/></clipPath>
<clipPath id="lowPart"><rect x="760" y="690" width="900" height="420"/></clipPath>
<clipPath id="rightPart"><rect x="994" y="233" width="660" height="872"/></clipPath>
<linearGradient id="mtopg" x1="0" y1="720" x2="0" y2="800" gradientUnits="userSpaceOnUse"><stop offset="0" stop-color="#fff"/><stop offset="1" stop-color="#000"/></linearGradient>
<mask id="mtop" maskUnits="userSpaceOnUse" x="760" y="233" width="900" height="900"><rect x="760" y="233" width="900" height="900" fill="url(#mtopg)"/></mask>
<linearGradient id="mfade" x1="0" y1="720" x2="0" y2="800" gradientUnits="userSpaceOnUse"><stop offset="0" stop-color="#000" stop-opacity="0"/><stop offset="1" stop-color="#000" stop-opacity="1"/></linearGradient>
<mask id="mcloud" maskUnits="userSpaceOnUse" x="760" y="233" width="900" height="900"><path d="M770.0 629.0 C772.5 627.8 780.0 624.2 785.0 622.0 C790.0 619.8 793.8 615.2 800.0 616.0 C806.2 616.8 816.0 624.8 822.0 627.0 C828.0 629.2 832.2 631.5 836.0 629.0 C839.8 626.5 842.3 616.8 845.0 612.0 C847.7 607.2 849.2 603.3 852.0 600.0 C854.8 596.7 857.8 592.8 862.0 592.0 C866.2 591.2 871.5 593.3 877.0 595.0 C882.5 596.7 890.7 602.8 895.0 602.0 C899.3 601.2 900.3 593.8 903.0 590.0 C905.7 586.2 907.3 583.7 911.0 579.0 C914.7 574.3 920.2 568.0 925.0 562.0 C929.8 556.0 934.2 547.7 940.0 543.0 C945.8 538.3 953.3 537.0 960.0 534.0 C966.7 531.0 974.0 527.2 980.0 525.0 C986.0 522.8 980.0 524.2 996.0 521.0 C1012.0 517.8 1060.0 512.0 1076.0 506.0 C1092.0 500.0 1086.5 491.0 1092.0 485.0 C1097.5 479.0 1103.2 475.3 1109.0 470.0 C1114.8 464.7 1120.5 457.5 1127.0 453.0 C1133.5 448.5 1140.3 446.0 1148.0 443.0 C1155.7 440.0 1166.7 438.5 1173.0 435.0 C1179.3 431.5 1180.7 426.0 1186.0 422.0 C1191.3 418.0 1198.8 412.8 1205.0 411.0 C1211.2 409.2 1218.5 412.7 1223.0 411.0 C1227.5 409.3 1227.8 403.2 1232.0 401.0 C1236.2 398.8 1241.8 399.0 1248.0 398.0 C1254.2 397.0 1262.0 394.7 1269.0 395.0 C1276.0 395.3 1283.0 398.0 1290.0 400.0 C1297.0 402.0 1306.3 403.3 1311.0 407.0 C1315.7 410.7 1315.2 416.7 1318.0 422.0 C1320.8 427.3 1324.7 433.8 1328.0 439.0 C1331.3 444.2 1335.2 447.8 1338.0 453.0 C1340.8 458.2 1341.8 466.0 1345.0 470.0 C1348.2 474.0 1354.5 473.5 1357.0 477.0 C1359.5 480.5 1359.8 486.2 1360.0 491.0 C1360.2 495.8 1348.0 499.0 1358.0 506.0 C1368.0 513.0 1406.0 529.0 1420.0 533.0 C1434.0 537.0 1434.5 531.2 1442.0 530.0 C1449.5 528.8 1459.0 528.2 1465.0 526.0 C1471.0 523.8 1472.2 519.0 1478.0 517.0 C1483.8 515.0 1492.7 514.3 1500.0 514.0 C1507.3 513.7 1514.5 513.3 1522.0 515.0 C1529.5 516.7 1538.7 520.5 1545.0 524.0 C1551.3 527.5 1554.2 533.2 1560.0 536.0 C1565.8 538.8 1574.2 537.5 1580.0 541.0 C1585.8 544.5 1590.7 551.0 1595.0 557.0 C1599.3 563.0 1602.3 569.8 1606.0 577.0 C1609.7 584.2 1615.0 592.5 1617.0 600.0 C1619.0 607.5 1619.8 616.0 1618.0 622.0 C1616.2 628.0 1609.3 630.5 1606.0 636.0 C1602.7 641.5 1601.0 649.0 1598.0 655.0 C1595.0 661.0 1587.7 667.2 1588.0 672.0 C1588.3 676.8 1595.5 683.8 1600.0 684.0 C1604.5 684.2 1610.0 675.8 1615.0 673.0 C1620.0 670.2 1624.5 666.8 1630.0 667.0 C1635.5 667.2 1645.0 653.2 1648.0 674.0 C1651.0 694.8 1652.3 769.0 1648.0 792.0 C1643.7 815.0 1629.0 805.7 1622.0 812.0 C1615.0 818.3 1609.7 822.7 1606.0 830.0 C1602.3 837.3 1603.5 849.0 1600.0 856.0 C1596.5 863.0 1595.8 868.0 1585.0 872.0 C1574.2 876.0 1550.0 877.0 1535.0 880.0 C1520.0 883.0 1507.5 887.0 1495.0 890.0 C1482.5 893.0 1470.0 897.3 1460.0 898.0 C1450.0 898.7 1447.5 895.7 1435.0 894.0 C1422.5 892.3 1397.5 890.3 1385.0 888.0 C1372.5 885.7 1368.3 883.2 1360.0 880.0 C1351.7 876.8 1343.3 872.2 1335.0 869.0 C1326.7 865.8 1322.5 863.5 1310.0 861.0 C1297.5 858.5 1276.7 856.0 1260.0 854.0 C1243.3 852.0 1228.3 850.5 1210.0 849.0 C1191.7 847.5 1168.3 845.5 1150.0 845.0 C1131.7 844.5 1115.0 846.2 1100.0 846.0 C1085.0 845.8 1073.3 845.3 1060.0 844.0 C1046.7 842.7 1031.0 841.0 1020.0 838.0 C1009.0 835.0 1002.0 828.8 994.0 826.0 C986.0 823.2 981.8 822.7 972.0 821.0 C962.2 819.3 947.0 818.2 935.0 816.0 C923.0 813.8 908.3 811.3 900.0 808.0 C891.7 804.7 889.7 801.0 885.0 796.0 C880.3 791.0 876.2 783.5 872.0 778.0 C867.8 772.5 866.2 766.3 860.0 763.0 C853.8 759.7 843.3 760.0 835.0 758.0 C826.7 756.0 817.2 754.7 810.0 751.0 C802.8 747.3 793.7 741.2 792.0 736.0 C790.3 730.8 800.3 725.2 800.0 720.0 C799.7 714.8 795.0 710.3 790.0 705.0 C785.0 699.7 773.3 690.8 770.0 688.0 Z" fill="#fff" filter="url(#b6)" transform="translate(0,6)"/><rect x="760" y="720" width="900" height="420" fill="url(#mfade)"/></mask>
</defs>
<rect x="772.2" y="233" width="873" height="872.7" fill="#eceefb"/>
<rect x="773.2" y="234" width="871" height="870.7" fill="url(#sky)"/>
<g clip-path="url(#art)">
<!-- cyan halo -->
<path d="M770.0 629.0 C772.5 627.8 780.0 624.2 785.0 622.0 C790.0 619.8 793.8 615.2 800.0 616.0 C806.2 616.8 816.0 624.8 822.0 627.0 C828.0 629.2 832.2 631.5 836.0 629.0 C839.8 626.5 842.3 616.8 845.0 612.0 C847.7 607.2 849.2 603.3 852.0 600.0 C854.8 596.7 857.8 592.8 862.0 592.0 C866.2 591.2 871.5 593.3 877.0 595.0 C882.5 596.7 890.7 602.8 895.0 602.0 C899.3 601.2 900.3 593.8 903.0 590.0 C905.7 586.2 907.3 583.7 911.0 579.0 C914.7 574.3 920.2 568.0 925.0 562.0 C929.8 556.0 934.2 547.7 940.0 543.0 C945.8 538.3 953.3 537.0 960.0 534.0 C966.7 531.0 974.0 527.2 980.0 525.0 C986.0 522.8 980.0 524.2 996.0 521.0 C1012.0 517.8 1060.0 512.0 1076.0 506.0 C1092.0 500.0 1086.5 491.0 1092.0 485.0 C1097.5 479.0 1103.2 475.3 1109.0 470.0 C1114.8 464.7 1120.5 457.5 1127.0 453.0 C1133.5 448.5 1140.3 446.0 1148.0 443.0 C1155.7 440.0 1166.7 438.5 1173.0 435.0 C1179.3 431.5 1180.7 426.0 1186.0 422.0 C1191.3 418.0 1198.8 412.8 1205.0 411.0 C1211.2 409.2 1218.5 412.7 1223.0 411.0 C1227.5 409.3 1227.8 403.2 1232.0 401.0 C1236.2 398.8 1241.8 399.0 1248.0 398.0 C1254.2 397.0 1262.0 394.7 1269.0 395.0 C1276.0 395.3 1283.0 398.0 1290.0 400.0 C1297.0 402.0 1306.3 403.3 1311.0 407.0 C1315.7 410.7 1315.2 416.7 1318.0 422.0 C1320.8 427.3 1324.7 433.8 1328.0 439.0 C1331.3 444.2 1335.2 447.8 1338.0 453.0 C1340.8 458.2 1341.8 466.0 1345.0 470.0 C1348.2 474.0 1354.5 473.5 1357.0 477.0 C1359.5 480.5 1359.8 486.2 1360.0 491.0 C1360.2 495.8 1348.0 499.0 1358.0 506.0 C1368.0 513.0 1406.0 529.0 1420.0 533.0 C1434.0 537.0 1434.5 531.2 1442.0 530.0 C1449.5 528.8 1459.0 528.2 1465.0 526.0 C1471.0 523.8 1472.2 519.0 1478.0 517.0 C1483.8 515.0 1492.7 514.3 1500.0 514.0 C1507.3 513.7 1514.5 513.3 1522.0 515.0 C1529.5 516.7 1538.7 520.5 1545.0 524.0 C1551.3 527.5 1554.2 533.2 1560.0 536.0 C1565.8 538.8 1574.2 537.5 1580.0 541.0 C1585.8 544.5 1590.7 551.0 1595.0 557.0 C1599.3 563.0 1602.3 569.8 1606.0 577.0 C1609.7 584.2 1615.0 592.5 1617.0 600.0 C1619.0 607.5 1619.8 616.0 1618.0 622.0 C1616.2 628.0 1609.3 630.5 1606.0 636.0 C1602.7 641.5 1601.0 649.0 1598.0 655.0 C1595.0 661.0 1587.7 667.2 1588.0 672.0 C1588.3 676.8 1595.5 683.8 1600.0 684.0 C1604.5 684.2 1610.0 675.8 1615.0 673.0 C1620.0 670.2 1624.5 666.8 1630.0 667.0 C1635.5 667.2 1645.0 653.2 1648.0 674.0 C1651.0 694.8 1652.3 769.0 1648.0 792.0 C1643.7 815.0 1629.0 805.7 1622.0 812.0 C1615.0 818.3 1609.7 822.7 1606.0 830.0 C1602.3 837.3 1603.5 849.0 1600.0 856.0 C1596.5 863.0 1595.8 868.0 1585.0 872.0 C1574.2 876.0 1550.0 877.0 1535.0 880.0 C1520.0 883.0 1507.5 887.0 1495.0 890.0 C1482.5 893.0 1470.0 897.3 1460.0 898.0 C1450.0 898.7 1447.5 895.7 1435.0 894.0 C1422.5 892.3 1397.5 890.3 1385.0 888.0 C1372.5 885.7 1368.3 883.2 1360.0 880.0 C1351.7 876.8 1343.3 872.2 1335.0 869.0 C1326.7 865.8 1322.5 863.5 1310.0 861.0 C1297.5 858.5 1276.7 856.0 1260.0 854.0 C1243.3 852.0 1228.3 850.5 1210.0 849.0 C1191.7 847.5 1168.3 845.5 1150.0 845.0 C1131.7 844.5 1115.0 846.2 1100.0 846.0 C1085.0 845.8 1073.3 845.3 1060.0 844.0 C1046.7 842.7 1031.0 841.0 1020.0 838.0 C1009.0 835.0 1002.0 828.8 994.0 826.0 C986.0 823.2 981.8 822.7 972.0 821.0 C962.2 819.3 947.0 818.2 935.0 816.0 C923.0 813.8 908.3 811.3 900.0 808.0 C891.7 804.7 889.7 801.0 885.0 796.0 C880.3 791.0 876.2 783.5 872.0 778.0 C867.8 772.5 866.2 766.3 860.0 763.0 C853.8 759.7 843.3 760.0 835.0 758.0 C826.7 756.0 817.2 754.7 810.0 751.0 C802.8 747.3 793.7 741.2 792.0 736.0 C790.3 730.8 800.3 725.2 800.0 720.0 C799.7 714.8 795.0 710.3 790.0 705.0 C785.0 699.7 773.3 690.8 770.0 688.0 Z" fill="#3f97ff" opacity="0.6" filter="url(#b12)" transform="translate(0,12)"/>
<path d="M770.0 629.0 C772.5 627.8 780.0 624.2 785.0 622.0 C790.0 619.8 793.8 615.2 800.0 616.0 C806.2 616.8 816.0 624.8 822.0 627.0 C828.0 629.2 832.2 631.5 836.0 629.0 C839.8 626.5 842.3 616.8 845.0 612.0 C847.7 607.2 849.2 603.3 852.0 600.0 C854.8 596.7 857.8 592.8 862.0 592.0 C866.2 591.2 871.5 593.3 877.0 595.0 C882.5 596.7 890.7 602.8 895.0 602.0 C899.3 601.2 900.3 593.8 903.0 590.0 C905.7 586.2 907.3 583.7 911.0 579.0 C914.7 574.3 920.2 568.0 925.0 562.0 C929.8 556.0 934.2 547.7 940.0 543.0 C945.8 538.3 953.3 537.0 960.0 534.0 C966.7 531.0 974.0 527.2 980.0 525.0 C986.0 522.8 980.0 524.2 996.0 521.0 C1012.0 517.8 1060.0 512.0 1076.0 506.0 C1092.0 500.0 1086.5 491.0 1092.0 485.0 C1097.5 479.0 1103.2 475.3 1109.0 470.0 C1114.8 464.7 1120.5 457.5 1127.0 453.0 C1133.5 448.5 1140.3 446.0 1148.0 443.0 C1155.7 440.0 1166.7 438.5 1173.0 435.0 C1179.3 431.5 1180.7 426.0 1186.0 422.0 C1191.3 418.0 1198.8 412.8 1205.0 411.0 C1211.2 409.2 1218.5 412.7 1223.0 411.0 C1227.5 409.3 1227.8 403.2 1232.0 401.0 C1236.2 398.8 1241.8 399.0 1248.0 398.0 C1254.2 397.0 1262.0 394.7 1269.0 395.0 C1276.0 395.3 1283.0 398.0 1290.0 400.0 C1297.0 402.0 1306.3 403.3 1311.0 407.0 C1315.7 410.7 1315.2 416.7 1318.0 422.0 C1320.8 427.3 1324.7 433.8 1328.0 439.0 C1331.3 444.2 1335.2 447.8 1338.0 453.0 C1340.8 458.2 1341.8 466.0 1345.0 470.0 C1348.2 474.0 1354.5 473.5 1357.0 477.0 C1359.5 480.5 1359.8 486.2 1360.0 491.0 C1360.2 495.8 1348.0 499.0 1358.0 506.0 C1368.0 513.0 1406.0 529.0 1420.0 533.0 C1434.0 537.0 1434.5 531.2 1442.0 530.0 C1449.5 528.8 1459.0 528.2 1465.0 526.0 C1471.0 523.8 1472.2 519.0 1478.0 517.0 C1483.8 515.0 1492.7 514.3 1500.0 514.0 C1507.3 513.7 1514.5 513.3 1522.0 515.0 C1529.5 516.7 1538.7 520.5 1545.0 524.0 C1551.3 527.5 1554.2 533.2 1560.0 536.0 C1565.8 538.8 1574.2 537.5 1580.0 541.0 C1585.8 544.5 1590.7 551.0 1595.0 557.0 C1599.3 563.0 1602.3 569.8 1606.0 577.0 C1609.7 584.2 1615.0 592.5 1617.0 600.0 C1619.0 607.5 1619.8 616.0 1618.0 622.0 C1616.2 628.0 1609.3 630.5 1606.0 636.0 C1602.7 641.5 1601.0 649.0 1598.0 655.0 C1595.0 661.0 1587.7 667.2 1588.0 672.0 C1588.3 676.8 1595.5 683.8 1600.0 684.0 C1604.5 684.2 1610.0 675.8 1615.0 673.0 C1620.0 670.2 1624.5 666.8 1630.0 667.0 C1635.5 667.2 1645.0 653.2 1648.0 674.0 C1651.0 694.8 1652.3 769.0 1648.0 792.0 C1643.7 815.0 1629.0 805.7 1622.0 812.0 C1615.0 818.3 1609.7 822.7 1606.0 830.0 C1602.3 837.3 1603.5 849.0 1600.0 856.0 C1596.5 863.0 1595.8 868.0 1585.0 872.0 C1574.2 876.0 1550.0 877.0 1535.0 880.0 C1520.0 883.0 1507.5 887.0 1495.0 890.0 C1482.5 893.0 1470.0 897.3 1460.0 898.0 C1450.0 898.7 1447.5 895.7 1435.0 894.0 C1422.5 892.3 1397.5 890.3 1385.0 888.0 C1372.5 885.7 1368.3 883.2 1360.0 880.0 C1351.7 876.8 1343.3 872.2 1335.0 869.0 C1326.7 865.8 1322.5 863.5 1310.0 861.0 C1297.5 858.5 1276.7 856.0 1260.0 854.0 C1243.3 852.0 1228.3 850.5 1210.0 849.0 C1191.7 847.5 1168.3 845.5 1150.0 845.0 C1131.7 844.5 1115.0 846.2 1100.0 846.0 C1085.0 845.8 1073.3 845.3 1060.0 844.0 C1046.7 842.7 1031.0 841.0 1020.0 838.0 C1009.0 835.0 1002.0 828.8 994.0 826.0 C986.0 823.2 981.8 822.7 972.0 821.0 C962.2 819.3 947.0 818.2 935.0 816.0 C923.0 813.8 908.3 811.3 900.0 808.0 C891.7 804.7 889.7 801.0 885.0 796.0 C880.3 791.0 876.2 783.5 872.0 778.0 C867.8 772.5 866.2 766.3 860.0 763.0 C853.8 759.7 843.3 760.0 835.0 758.0 C826.7 756.0 817.2 754.7 810.0 751.0 C802.8 747.3 793.7 741.2 792.0 736.0 C790.3 730.8 800.3 725.2 800.0 720.0 C799.7 714.8 795.0 710.3 790.0 705.0 C785.0 699.7 773.3 690.8 770.0 688.0 Z" fill="#4aa4ff" opacity="0.6" filter="url(#b3)" transform="translate(0,-1)"/>
<ellipse cx="792" cy="603" rx="8" ry="15" fill="#4da0ff" opacity="0.8" filter="url(#b1)"/>
<ellipse cx="1150" cy="895" rx="60" ry="12" fill="#4f9cff" opacity="0.5" filter="url(#b6)"/>
<ellipse cx="1290" cy="905" rx="50" ry="10" fill="#4f9cff" opacity="0.4" filter="url(#b6)"/>
<g clip-path="url(#lowPart)"><path d="M770.0 629.0 C772.5 627.8 780.0 624.2 785.0 622.0 C790.0 619.8 793.8 615.2 800.0 616.0 C806.2 616.8 816.0 624.8 822.0 627.0 C828.0 629.2 832.2 631.5 836.0 629.0 C839.8 626.5 842.3 616.8 845.0 612.0 C847.7 607.2 849.2 603.3 852.0 600.0 C854.8 596.7 857.8 592.8 862.0 592.0 C866.2 591.2 871.5 593.3 877.0 595.0 C882.5 596.7 890.7 602.8 895.0 602.0 C899.3 601.2 900.3 593.8 903.0 590.0 C905.7 586.2 907.3 583.7 911.0 579.0 C914.7 574.3 920.2 568.0 925.0 562.0 C929.8 556.0 934.2 547.7 940.0 543.0 C945.8 538.3 953.3 537.0 960.0 534.0 C966.7 531.0 974.0 527.2 980.0 525.0 C986.0 522.8 980.0 524.2 996.0 521.0 C1012.0 517.8 1060.0 512.0 1076.0 506.0 C1092.0 500.0 1086.5 491.0 1092.0 485.0 C1097.5 479.0 1103.2 475.3 1109.0 470.0 C1114.8 464.7 1120.5 457.5 1127.0 453.0 C1133.5 448.5 1140.3 446.0 1148.0 443.0 C1155.7 440.0 1166.7 438.5 1173.0 435.0 C1179.3 431.5 1180.7 426.0 1186.0 422.0 C1191.3 418.0 1198.8 412.8 1205.0 411.0 C1211.2 409.2 1218.5 412.7 1223.0 411.0 C1227.5 409.3 1227.8 403.2 1232.0 401.0 C1236.2 398.8 1241.8 399.0 1248.0 398.0 C1254.2 397.0 1262.0 394.7 1269.0 395.0 C1276.0 395.3 1283.0 398.0 1290.0 400.0 C1297.0 402.0 1306.3 403.3 1311.0 407.0 C1315.7 410.7 1315.2 416.7 1318.0 422.0 C1320.8 427.3 1324.7 433.8 1328.0 439.0 C1331.3 444.2 1335.2 447.8 1338.0 453.0 C1340.8 458.2 1341.8 466.0 1345.0 470.0 C1348.2 474.0 1354.5 473.5 1357.0 477.0 C1359.5 480.5 1359.8 486.2 1360.0 491.0 C1360.2 495.8 1348.0 499.0 1358.0 506.0 C1368.0 513.0 1406.0 529.0 1420.0 533.0 C1434.0 537.0 1434.5 531.2 1442.0 530.0 C1449.5 528.8 1459.0 528.2 1465.0 526.0 C1471.0 523.8 1472.2 519.0 1478.0 517.0 C1483.8 515.0 1492.7 514.3 1500.0 514.0 C1507.3 513.7 1514.5 513.3 1522.0 515.0 C1529.5 516.7 1538.7 520.5 1545.0 524.0 C1551.3 527.5 1554.2 533.2 1560.0 536.0 C1565.8 538.8 1574.2 537.5 1580.0 541.0 C1585.8 544.5 1590.7 551.0 1595.0 557.0 C1599.3 563.0 1602.3 569.8 1606.0 577.0 C1609.7 584.2 1615.0 592.5 1617.0 600.0 C1619.0 607.5 1619.8 616.0 1618.0 622.0 C1616.2 628.0 1609.3 630.5 1606.0 636.0 C1602.7 641.5 1601.0 649.0 1598.0 655.0 C1595.0 661.0 1587.7 667.2 1588.0 672.0 C1588.3 676.8 1595.5 683.8 1600.0 684.0 C1604.5 684.2 1610.0 675.8 1615.0 673.0 C1620.0 670.2 1624.5 666.8 1630.0 667.0 C1635.5 667.2 1645.0 653.2 1648.0 674.0 C1651.0 694.8 1652.3 769.0 1648.0 792.0 C1643.7 815.0 1629.0 805.7 1622.0 812.0 C1615.0 818.3 1609.7 822.7 1606.0 830.0 C1602.3 837.3 1603.5 849.0 1600.0 856.0 C1596.5 863.0 1595.8 868.0 1585.0 872.0 C1574.2 876.0 1550.0 877.0 1535.0 880.0 C1520.0 883.0 1507.5 887.0 1495.0 890.0 C1482.5 893.0 1470.0 897.3 1460.0 898.0 C1450.0 898.7 1447.5 895.7 1435.0 894.0 C1422.5 892.3 1397.5 890.3 1385.0 888.0 C1372.5 885.7 1368.3 883.2 1360.0 880.0 C1351.7 876.8 1343.3 872.2 1335.0 869.0 C1326.7 865.8 1322.5 863.5 1310.0 861.0 C1297.5 858.5 1276.7 856.0 1260.0 854.0 C1243.3 852.0 1228.3 850.5 1210.0 849.0 C1191.7 847.5 1168.3 845.5 1150.0 845.0 C1131.7 844.5 1115.0 846.2 1100.0 846.0 C1085.0 845.8 1073.3 845.3 1060.0 844.0 C1046.7 842.7 1031.0 841.0 1020.0 838.0 C1009.0 835.0 1002.0 828.8 994.0 826.0 C986.0 823.2 981.8 822.7 972.0 821.0 C962.2 819.3 947.0 818.2 935.0 816.0 C923.0 813.8 908.3 811.3 900.0 808.0 C891.7 804.7 889.7 801.0 885.0 796.0 C880.3 791.0 876.2 783.5 872.0 778.0 C867.8 772.5 866.2 766.3 860.0 763.0 C853.8 759.7 843.3 760.0 835.0 758.0 C826.7 756.0 817.2 754.7 810.0 751.0 C802.8 747.3 793.7 741.2 792.0 736.0 C790.3 730.8 800.3 725.2 800.0 720.0 C799.7 714.8 795.0 710.3 790.0 705.0 C785.0 699.7 773.3 690.8 770.0 688.0 Z" fill="#dfe6ff" opacity="0.6" filter="url(#b6)" transform="translate(0,7)"/></g>
<g clip-path="url(#rightPart)"><path d="M770.0 629.0 C772.5 627.8 780.0 624.2 785.0 622.0 C790.0 619.8 793.8 615.2 800.0 616.0 C806.2 616.8 816.0 624.8 822.0 627.0 C828.0 629.2 832.2 631.5 836.0 629.0 C839.8 626.5 842.3 616.8 845.0 612.0 C847.7 607.2 849.2 603.3 852.0 600.0 C854.8 596.7 857.8 592.8 862.0 592.0 C866.2 591.2 871.5 593.3 877.0 595.0 C882.5 596.7 890.7 602.8 895.0 602.0 C899.3 601.2 900.3 593.8 903.0 590.0 C905.7 586.2 907.3 583.7 911.0 579.0 C914.7 574.3 920.2 568.0 925.0 562.0 C929.8 556.0 934.2 547.7 940.0 543.0 C945.8 538.3 953.3 537.0 960.0 534.0 C966.7 531.0 974.0 527.2 980.0 525.0 C986.0 522.8 980.0 524.2 996.0 521.0 C1012.0 517.8 1060.0 512.0 1076.0 506.0 C1092.0 500.0 1086.5 491.0 1092.0 485.0 C1097.5 479.0 1103.2 475.3 1109.0 470.0 C1114.8 464.7 1120.5 457.5 1127.0 453.0 C1133.5 448.5 1140.3 446.0 1148.0 443.0 C1155.7 440.0 1166.7 438.5 1173.0 435.0 C1179.3 431.5 1180.7 426.0 1186.0 422.0 C1191.3 418.0 1198.8 412.8 1205.0 411.0 C1211.2 409.2 1218.5 412.7 1223.0 411.0 C1227.5 409.3 1227.8 403.2 1232.0 401.0 C1236.2 398.8 1241.8 399.0 1248.0 398.0 C1254.2 397.0 1262.0 394.7 1269.0 395.0 C1276.0 395.3 1283.0 398.0 1290.0 400.0 C1297.0 402.0 1306.3 403.3 1311.0 407.0 C1315.7 410.7 1315.2 416.7 1318.0 422.0 C1320.8 427.3 1324.7 433.8 1328.0 439.0 C1331.3 444.2 1335.2 447.8 1338.0 453.0 C1340.8 458.2 1341.8 466.0 1345.0 470.0 C1348.2 474.0 1354.5 473.5 1357.0 477.0 C1359.5 480.5 1359.8 486.2 1360.0 491.0 C1360.2 495.8 1348.0 499.0 1358.0 506.0 C1368.0 513.0 1406.0 529.0 1420.0 533.0 C1434.0 537.0 1434.5 531.2 1442.0 530.0 C1449.5 528.8 1459.0 528.2 1465.0 526.0 C1471.0 523.8 1472.2 519.0 1478.0 517.0 C1483.8 515.0 1492.7 514.3 1500.0 514.0 C1507.3 513.7 1514.5 513.3 1522.0 515.0 C1529.5 516.7 1538.7 520.5 1545.0 524.0 C1551.3 527.5 1554.2 533.2 1560.0 536.0 C1565.8 538.8 1574.2 537.5 1580.0 541.0 C1585.8 544.5 1590.7 551.0 1595.0 557.0 C1599.3 563.0 1602.3 569.8 1606.0 577.0 C1609.7 584.2 1615.0 592.5 1617.0 600.0 C1619.0 607.5 1619.8 616.0 1618.0 622.0 C1616.2 628.0 1609.3 630.5 1606.0 636.0 C1602.7 641.5 1601.0 649.0 1598.0 655.0 C1595.0 661.0 1587.7 667.2 1588.0 672.0 C1588.3 676.8 1595.5 683.8 1600.0 684.0 C1604.5 684.2 1610.0 675.8 1615.0 673.0 C1620.0 670.2 1624.5 666.8 1630.0 667.0 C1635.5 667.2 1645.0 653.2 1648.0 674.0 C1651.0 694.8 1652.3 769.0 1648.0 792.0 C1643.7 815.0 1629.0 805.7 1622.0 812.0 C1615.0 818.3 1609.7 822.7 1606.0 830.0 C1602.3 837.3 1603.5 849.0 1600.0 856.0 C1596.5 863.0 1595.8 868.0 1585.0 872.0 C1574.2 876.0 1550.0 877.0 1535.0 880.0 C1520.0 883.0 1507.5 887.0 1495.0 890.0 C1482.5 893.0 1470.0 897.3 1460.0 898.0 C1450.0 898.7 1447.5 895.7 1435.0 894.0 C1422.5 892.3 1397.5 890.3 1385.0 888.0 C1372.5 885.7 1368.3 883.2 1360.0 880.0 C1351.7 876.8 1343.3 872.2 1335.0 869.0 C1326.7 865.8 1322.5 863.5 1310.0 861.0 C1297.5 858.5 1276.7 856.0 1260.0 854.0 C1243.3 852.0 1228.3 850.5 1210.0 849.0 C1191.7 847.5 1168.3 845.5 1150.0 845.0 C1131.7 844.5 1115.0 846.2 1100.0 846.0 C1085.0 845.8 1073.3 845.3 1060.0 844.0 C1046.7 842.7 1031.0 841.0 1020.0 838.0 C1009.0 835.0 1002.0 828.8 994.0 826.0 C986.0 823.2 981.8 822.7 972.0 821.0 C962.2 819.3 947.0 818.2 935.0 816.0 C923.0 813.8 908.3 811.3 900.0 808.0 C891.7 804.7 889.7 801.0 885.0 796.0 C880.3 791.0 876.2 783.5 872.0 778.0 C867.8 772.5 866.2 766.3 860.0 763.0 C853.8 759.7 843.3 760.0 835.0 758.0 C826.7 756.0 817.2 754.7 810.0 751.0 C802.8 747.3 793.7 741.2 792.0 736.0 C790.3 730.8 800.3 725.2 800.0 720.0 C799.7 714.8 795.0 710.3 790.0 705.0 C785.0 699.7 773.3 690.8 770.0 688.0 Z" fill="url(#shade)" filter="url(#rough2)"/></g>
<g clip-path="url(#leftHalf)"><path d="M770.0 629.0 C772.5 627.8 780.0 624.2 785.0 622.0 C790.0 619.8 793.8 615.2 800.0 616.0 C806.2 616.8 816.0 624.8 822.0 627.0 C828.0 629.2 832.2 631.5 836.0 629.0 C839.8 626.5 842.3 616.8 845.0 612.0 C847.7 607.2 849.2 603.3 852.0 600.0 C854.8 596.7 857.8 592.8 862.0 592.0 C866.2 591.2 871.5 593.3 877.0 595.0 C882.5 596.7 890.7 602.8 895.0 602.0 C899.3 601.2 900.3 593.8 903.0 590.0 C905.7 586.2 907.3 583.7 911.0 579.0 C914.7 574.3 920.2 568.0 925.0 562.0 C929.8 556.0 934.2 547.7 940.0 543.0 C945.8 538.3 953.3 537.0 960.0 534.0 C966.7 531.0 974.0 527.2 980.0 525.0 C986.0 522.8 980.0 524.2 996.0 521.0 C1012.0 517.8 1060.0 512.0 1076.0 506.0 C1092.0 500.0 1086.5 491.0 1092.0 485.0 C1097.5 479.0 1103.2 475.3 1109.0 470.0 C1114.8 464.7 1120.5 457.5 1127.0 453.0 C1133.5 448.5 1140.3 446.0 1148.0 443.0 C1155.7 440.0 1166.7 438.5 1173.0 435.0 C1179.3 431.5 1180.7 426.0 1186.0 422.0 C1191.3 418.0 1198.8 412.8 1205.0 411.0 C1211.2 409.2 1218.5 412.7 1223.0 411.0 C1227.5 409.3 1227.8 403.2 1232.0 401.0 C1236.2 398.8 1241.8 399.0 1248.0 398.0 C1254.2 397.0 1262.0 394.7 1269.0 395.0 C1276.0 395.3 1283.0 398.0 1290.0 400.0 C1297.0 402.0 1306.3 403.3 1311.0 407.0 C1315.7 410.7 1315.2 416.7 1318.0 422.0 C1320.8 427.3 1324.7 433.8 1328.0 439.0 C1331.3 444.2 1335.2 447.8 1338.0 453.0 C1340.8 458.2 1341.8 466.0 1345.0 470.0 C1348.2 474.0 1354.5 473.5 1357.0 477.0 C1359.5 480.5 1359.8 486.2 1360.0 491.0 C1360.2 495.8 1348.0 499.0 1358.0 506.0 C1368.0 513.0 1406.0 529.0 1420.0 533.0 C1434.0 537.0 1434.5 531.2 1442.0 530.0 C1449.5 528.8 1459.0 528.2 1465.0 526.0 C1471.0 523.8 1472.2 519.0 1478.0 517.0 C1483.8 515.0 1492.7 514.3 1500.0 514.0 C1507.3 513.7 1514.5 513.3 1522.0 515.0 C1529.5 516.7 1538.7 520.5 1545.0 524.0 C1551.3 527.5 1554.2 533.2 1560.0 536.0 C1565.8 538.8 1574.2 537.5 1580.0 541.0 C1585.8 544.5 1590.7 551.0 1595.0 557.0 C1599.3 563.0 1602.3 569.8 1606.0 577.0 C1609.7 584.2 1615.0 592.5 1617.0 600.0 C1619.0 607.5 1619.8 616.0 1618.0 622.0 C1616.2 628.0 1609.3 630.5 1606.0 636.0 C1602.7 641.5 1601.0 649.0 1598.0 655.0 C1595.0 661.0 1587.7 667.2 1588.0 672.0 C1588.3 676.8 1595.5 683.8 1600.0 684.0 C1604.5 684.2 1610.0 675.8 1615.0 673.0 C1620.0 670.2 1624.5 666.8 1630.0 667.0 C1635.5 667.2 1645.0 653.2 1648.0 674.0 C1651.0 694.8 1652.3 769.0 1648.0 792.0 C1643.7 815.0 1629.0 805.7 1622.0 812.0 C1615.0 818.3 1609.7 822.7 1606.0 830.0 C1602.3 837.3 1603.5 849.0 1600.0 856.0 C1596.5 863.0 1595.8 868.0 1585.0 872.0 C1574.2 876.0 1550.0 877.0 1535.0 880.0 C1520.0 883.0 1507.5 887.0 1495.0 890.0 C1482.5 893.0 1470.0 897.3 1460.0 898.0 C1450.0 898.7 1447.5 895.7 1435.0 894.0 C1422.5 892.3 1397.5 890.3 1385.0 888.0 C1372.5 885.7 1368.3 883.2 1360.0 880.0 C1351.7 876.8 1343.3 872.2 1335.0 869.0 C1326.7 865.8 1322.5 863.5 1310.0 861.0 C1297.5 858.5 1276.7 856.0 1260.0 854.0 C1243.3 852.0 1228.3 850.5 1210.0 849.0 C1191.7 847.5 1168.3 845.5 1150.0 845.0 C1131.7 844.5 1115.0 846.2 1100.0 846.0 C1085.0 845.8 1073.3 845.3 1060.0 844.0 C1046.7 842.7 1031.0 841.0 1020.0 838.0 C1009.0 835.0 1002.0 828.8 994.0 826.0 C986.0 823.2 981.8 822.7 972.0 821.0 C962.2 819.3 947.0 818.2 935.0 816.0 C923.0 813.8 908.3 811.3 900.0 808.0 C891.7 804.7 889.7 801.0 885.0 796.0 C880.3 791.0 876.2 783.5 872.0 778.0 C867.8 772.5 866.2 766.3 860.0 763.0 C853.8 759.7 843.3 760.0 835.0 758.0 C826.7 756.0 817.2 754.7 810.0 751.0 C802.8 747.3 793.7 741.2 792.0 736.0 C790.3 730.8 800.3 725.2 800.0 720.0 C799.7 714.8 795.0 710.3 790.0 705.0 C785.0 699.7 773.3 690.8 770.0 688.0 Z" fill="url(#shadeL)" filter="url(#rough)"/></g>
<g clip-path="url(#rightPart)"><path d="M770.0 629.0 C772.5 627.8 780.0 624.2 785.0 622.0 C790.0 619.8 793.8 615.2 800.0 616.0 C806.2 616.8 816.0 624.8 822.0 627.0 C828.0 629.2 832.2 631.5 836.0 629.0 C839.8 626.5 842.3 616.8 845.0 612.0 C847.7 607.2 849.2 603.3 852.0 600.0 C854.8 596.7 857.8 592.8 862.0 592.0 C866.2 591.2 871.5 593.3 877.0 595.0 C882.5 596.7 890.7 602.8 895.0 602.0 C899.3 601.2 900.3 593.8 903.0 590.0 C905.7 586.2 907.3 583.7 911.0 579.0 C914.7 574.3 920.2 568.0 925.0 562.0 C929.8 556.0 934.2 547.7 940.0 543.0 C945.8 538.3 953.3 537.0 960.0 534.0 C966.7 531.0 974.0 527.2 980.0 525.0 C986.0 522.8 980.0 524.2 996.0 521.0 C1012.0 517.8 1060.0 512.0 1076.0 506.0 C1092.0 500.0 1086.5 491.0 1092.0 485.0 C1097.5 479.0 1103.2 475.3 1109.0 470.0 C1114.8 464.7 1120.5 457.5 1127.0 453.0 C1133.5 448.5 1140.3 446.0 1148.0 443.0 C1155.7 440.0 1166.7 438.5 1173.0 435.0 C1179.3 431.5 1180.7 426.0 1186.0 422.0 C1191.3 418.0 1198.8 412.8 1205.0 411.0 C1211.2 409.2 1218.5 412.7 1223.0 411.0 C1227.5 409.3 1227.8 403.2 1232.0 401.0 C1236.2 398.8 1241.8 399.0 1248.0 398.0 C1254.2 397.0 1262.0 394.7 1269.0 395.0 C1276.0 395.3 1283.0 398.0 1290.0 400.0 C1297.0 402.0 1306.3 403.3 1311.0 407.0 C1315.7 410.7 1315.2 416.7 1318.0 422.0 C1320.8 427.3 1324.7 433.8 1328.0 439.0 C1331.3 444.2 1335.2 447.8 1338.0 453.0 C1340.8 458.2 1341.8 466.0 1345.0 470.0 C1348.2 474.0 1354.5 473.5 1357.0 477.0 C1359.5 480.5 1359.8 486.2 1360.0 491.0 C1360.2 495.8 1348.0 499.0 1358.0 506.0 C1368.0 513.0 1406.0 529.0 1420.0 533.0 C1434.0 537.0 1434.5 531.2 1442.0 530.0 C1449.5 528.8 1459.0 528.2 1465.0 526.0 C1471.0 523.8 1472.2 519.0 1478.0 517.0 C1483.8 515.0 1492.7 514.3 1500.0 514.0 C1507.3 513.7 1514.5 513.3 1522.0 515.0 C1529.5 516.7 1538.7 520.5 1545.0 524.0 C1551.3 527.5 1554.2 533.2 1560.0 536.0 C1565.8 538.8 1574.2 537.5 1580.0 541.0 C1585.8 544.5 1590.7 551.0 1595.0 557.0 C1599.3 563.0 1602.3 569.8 1606.0 577.0 C1609.7 584.2 1615.0 592.5 1617.0 600.0 C1619.0 607.5 1619.8 616.0 1618.0 622.0 C1616.2 628.0 1609.3 630.5 1606.0 636.0 C1602.7 641.5 1601.0 649.0 1598.0 655.0 C1595.0 661.0 1587.7 667.2 1588.0 672.0 C1588.3 676.8 1595.5 683.8 1600.0 684.0 C1604.5 684.2 1610.0 675.8 1615.0 673.0 C1620.0 670.2 1624.5 666.8 1630.0 667.0 C1635.5 667.2 1645.0 653.2 1648.0 674.0 C1651.0 694.8 1652.3 769.0 1648.0 792.0 C1643.7 815.0 1629.0 805.7 1622.0 812.0 C1615.0 818.3 1609.7 822.7 1606.0 830.0 C1602.3 837.3 1603.5 849.0 1600.0 856.0 C1596.5 863.0 1595.8 868.0 1585.0 872.0 C1574.2 876.0 1550.0 877.0 1535.0 880.0 C1520.0 883.0 1507.5 887.0 1495.0 890.0 C1482.5 893.0 1470.0 897.3 1460.0 898.0 C1450.0 898.7 1447.5 895.7 1435.0 894.0 C1422.5 892.3 1397.5 890.3 1385.0 888.0 C1372.5 885.7 1368.3 883.2 1360.0 880.0 C1351.7 876.8 1343.3 872.2 1335.0 869.0 C1326.7 865.8 1322.5 863.5 1310.0 861.0 C1297.5 858.5 1276.7 856.0 1260.0 854.0 C1243.3 852.0 1228.3 850.5 1210.0 849.0 C1191.7 847.5 1168.3 845.5 1150.0 845.0 C1131.7 844.5 1115.0 846.2 1100.0 846.0 C1085.0 845.8 1073.3 845.3 1060.0 844.0 C1046.7 842.7 1031.0 841.0 1020.0 838.0 C1009.0 835.0 1002.0 828.8 994.0 826.0 C986.0 823.2 981.8 822.7 972.0 821.0 C962.2 819.3 947.0 818.2 935.0 816.0 C923.0 813.8 908.3 811.3 900.0 808.0 C891.7 804.7 889.7 801.0 885.0 796.0 C880.3 791.0 876.2 783.5 872.0 778.0 C867.8 772.5 866.2 766.3 860.0 763.0 C853.8 759.7 843.3 760.0 835.0 758.0 C826.7 756.0 817.2 754.7 810.0 751.0 C802.8 747.3 793.7 741.2 792.0 736.0 C790.3 730.8 800.3 725.2 800.0 720.0 C799.7 714.8 795.0 710.3 790.0 705.0 C785.0 699.7 773.3 690.8 770.0 688.0 Z " fill="#fff" filter="url(#rough)" mask="url(#mtop)"/></g>
<path d="M996 834 L1300 834 L1350 848 L1310 860 L1200 853 L1100 851 L996 846 Z" fill="#e2e6fd" opacity="0.9" filter="url(#b3)"/>
<path d="M1300.0 852.0 C1306.7 853.7 1326.7 858.3 1340.0 862.0 C1353.3 865.7 1366.7 870.7 1380.0 874.0 C1393.3 877.3 1406.7 879.7 1420.0 882.0 C1433.3 884.3 1447.5 887.7 1460.0 888.0 C1472.5 888.3 1491.7 886.3 1495.0 884.0 C1498.3 881.7 1489.2 877.0 1480.0 874.0 C1470.8 871.0 1453.3 868.7 1440.0 866.0 C1426.7 863.3 1415.0 860.7 1400.0 858.0 C1385.0 855.3 1366.7 851.0 1350.0 850.0 C1333.3 849.0 1308.3 851.7 1300.0 852.0 Z" fill="#f4f5ff" opacity="0.85" filter="url(#b3)"/>
<ellipse cx="1466" cy="880" rx="28" ry="9" fill="#fff" opacity="0.8" filter="url(#b3)"/>
<!-- soft inner shading -->
<rect x="773" y="395" width="871" height="440" fill="#fff" filter="url(#ctex)" mask="url(#mcloud)" opacity="0.75"/>
</g>
<defs>
<linearGradient id="ftop" x1="994" y1="0" x2="1424" y2="0" gradientUnits="userSpaceOnUse">
<stop offset="0" stop-color="#1a2f9e"/><stop offset="0.035" stop-color="#1b8fc0"/><stop offset="0.06" stop-color="#7a3a6a"/><stop offset="0.09" stop-color="#1e9aa8"/><stop offset="0.125" stop-color="#29c07a"/><stop offset="0.16" stop-color="#e46a52"/>
<stop offset="0.26" stop-color="#ee8866"/><stop offset="0.33" stop-color="#f8a842"/><stop offset="0.5" stop-color="#fdbb2c"/><stop offset="0.72" stop-color="#fba925"/><stop offset="0.85" stop-color="#f98526"/><stop offset="0.93" stop-color="#f75a2a"/><stop offset="1" stop-color="#f33a2e"/></linearGradient>
<linearGradient id="fleft" x1="0" y1="502" x2="0" y2="836.3" gradientUnits="userSpaceOnUse">
<stop offset="0" stop-color="#15279a"/><stop offset="0.3" stop-color="#1a2da8"/><stop offset="0.42" stop-color="#3a2ab8"/><stop offset="0.55" stop-color="#a81cc8"/><stop offset="0.68" stop-color="#f016c0"/><stop offset="0.8" stop-color="#c01ac0"/><stop offset="0.92" stop-color="#4a20b0"/><stop offset="1" stop-color="#2a1a90"/></linearGradient>
<linearGradient id="fright" x1="0" y1="502" x2="0" y2="836.3" gradientUnits="userSpaceOnUse">
<stop offset="0" stop-color="#f5432c"/><stop offset="0.1" stop-color="#ee2a4a"/><stop offset="0.22" stop-color="#e3127c"/><stop offset="0.4" stop-color="#d0128c"/><stop offset="0.5" stop-color="#8a1a9c"/><stop offset="0.57" stop-color="#7a22a8"/><stop offset="0.615" stop-color="#f08a2a"/><stop offset="0.74" stop-color="#fb8a1c"/><stop offset="0.8" stop-color="#e0507a"/><stop offset="0.9" stop-color="#b01a8a"/><stop offset="1" stop-color="#8a1a9a"/></linearGradient>
<linearGradient id="fbot" x1="994" y1="0" x2="1424" y2="0" gradientUnits="userSpaceOnUse">
<stop offset="0" stop-color="#2a1a8e"/><stop offset="0.04" stop-color="#6a1a9a"/><stop offset="0.075" stop-color="#f0267a"/><stop offset="0.1" stop-color="#5a1f9a"/><stop offset="0.16" stop-color="#1f38b0"/><stop offset="0.27" stop-color="#22309e"/>
<stop offset="0.31" stop-color="#c0403a"/><stop offset="0.345" stop-color="#f5a030"/><stop offset="0.38" stop-color="#e0482e"/><stop offset="0.43" stop-color="#3a2a8a"/><stop offset="0.47" stop-color="#b03040"/><stop offset="0.5" stop-color="#f06a2a"/><stop offset="0.53" stop-color="#c0383a"/><stop offset="0.57" stop-color="#3a2a8a"/>
<stop offset="0.61" stop-color="#c8403a"/><stop offset="0.66" stop-color="#f2602c"/><stop offset="0.71" stop-color="#c03a4a"/><stop offset="0.76" stop-color="#33298c"/><stop offset="0.84" stop-color="#5a1c8c"/><stop offset="0.9" stop-color="#8a1488"/><stop offset="0.95" stop-color="#c0186a"/><stop offset="1" stop-color="#7a1a8a"/></linearGradient>
<linearGradient id="psky" x1="1004" y1="0" x2="1413.8" y2="0" gradientUnits="userSpaceOnUse"><stop offset="0" stop-color="#c6d2db"/><stop offset="0.35" stop-color="#d0d6d9"/><stop offset="0.7" stop-color="#e2dfd6"/><stop offset="1" stop-color="#dcd8cc"/></linearGradient>
<linearGradient id="pskyv" x1="0" y1="517.3" x2="0" y2="640" gradientUnits="userSpaceOnUse"><stop offset="0" stop-color="#b8c6d2" stop-opacity="0.35"/><stop offset="0.5" stop-color="#fff" stop-opacity="0.08"/><stop offset="1" stop-color="#fff" stop-opacity="0.2"/></linearGradient>
<linearGradient id="pfor" x1="0" y1="610" x2="0" y2="770" gradientUnits="userSpaceOnUse"><stop offset="0" stop-color="#4a5651"/><stop offset="0.25" stop-color="#2c3835"/><stop offset="0.55" stop-color="#141b1b"/><stop offset="1" stop-color="#11181a"/></linearGradient>
<linearGradient id="pfor2" x1="0" y1="517" x2="0" y2="770" gradientUnits="userSpaceOnUse"><stop offset="0" stop-color="#2a2d2a"/><stop offset="0.4" stop-color="#222826"/><stop offset="0.7" stop-color="#141a19"/><stop offset="1" stop-color="#161a18"/></linearGradient>
<linearGradient id="proad" x1="0" y1="762" x2="0" y2="824" gradientUnits="userSpaceOnUse"><stop offset="0" stop-color="#53575b"/><stop offset="0.4" stop-color="#43474b"/><stop offset="1" stop-color="#36393d"/></linearGradient>
<linearGradient id="pmnt" x1="0" y1="610" x2="0" y2="700" gradientUnits="userSpaceOnUse"><stop offset="0" stop-color="#aab6c4"/><stop offset="0.3" stop-color="#8c9aac"/><stop offset="1" stop-color="#5d6c7a"/></linearGradient>
<clipPath id="pclip"><rect x="1004" y="517.3" width="409.79999999999995" height="306.70000000000005"/></clipPath>
<clipPath id="fclip"><rect x="994" y="502" width="430" height="334.29999999999995"/></clipPath>
</defs>
<g clip-path="url(#fclip)">
<rect x="994" y="502" width="430" height="334.29999999999995" fill="#2a1a8e"/>
<rect x="994" y="502" width="430" height="16" fill="url(#ftop)"/>
<rect x="994" y="824" width="430" height="12.299999999999955" fill="url(#fbot)"/>
<path d="M994 502 L1004 517.3 L1004 824 L994 836.3 Z" fill="url(#fleft)"/>
<path d="M1424 502 L1413.8 517.3 L1413.8 824 L1424 836.3 Z" fill="url(#fright)"/>
<!-- neon lines -->
<g stroke-width="0.9" fill="none">
<path d="M996 560 L1003 600 M997 530 L1004 575 M999 515 L1004 545 M995 590 L1003 640 M996 620 L1003 655" stroke="#22e0f0"/>
<path d="M1001 503 L1012 517 M1008 503 L1020 517 M1034 503 L1044 517 M1038 503 L1048 517 M1042 503 L1052 517" stroke="#24e6d8"/>
<path d="M1058 503 L1064 517 M1062 503 L1068 517" stroke="#5cf07a"/>
<path d="M1075 503 L1082 517" stroke="#ffd23a" stroke-width="1.2"/>
<path d="M1262 503 L1258 517 M1300 503 L1294 517 M1335 503 L1330 517" stroke="#ffe05a" stroke-width="1"/>
<path d="M1340 517 C1370 514 1380 508 1386 503" stroke="#ffd860" stroke-width="0.8"/>
<path d="M1423 505 L1414 519 M1423 512 L1415 526" stroke="#ffc23a" stroke-width="1.1"/>
<path d="M1423 536 L1414 548 M1423 600 L1414 612 M1423 650 L1415 664" stroke="#ff7ad8" stroke-width="0.8"/>
<path d="M1016 836 L1036 825" stroke="#ff2a8a" stroke-width="3"/>
<path d="M1066 836 L1082 825" stroke="#28b4ff" stroke-width="1.2"/>
<path d="M1141 836 L1147 825" stroke="#ffd21a" stroke-width="3.6"/>
<path d="M1209.500 836 L1209.500 825" stroke="#ffd21a" stroke-width="2.6"/>
<path d="M1281 836 L1273 825" stroke="#ffd21a" stroke-width="3.6"/>
<path d="M1352 836 L1340 825" stroke="#d0287a" stroke-width="1.2"/>
<path d="M1404 836 L1388 825" stroke="#ff2a5a" stroke-width="3"/>
<path d="M994 816 L1004 811 M994 790 L1004 786" stroke="#ff3ab0" stroke-width="1.6"/>
</g>
</g>
<g clip-path="url(#pclip)">
<rect x="1004" y="517.3" width="409.79999999999995" height="306.70000000000005" fill="url(#psky)"/>
<rect x="1004" y="517.3" width="409.79999999999995" height="130" fill="url(#pskyv)"/>
<!-- far haze hills -->
<path d="M1004 652 L1060 634 L1100 642 L1140 630 L1170 642 L1170 720 L1004 720 Z" fill="#a4b0b9" filter="url(#b3)"/>
<!-- mountain -->
<path d="M1140 710 L1156 664 L1168 644 L1176 624 L1188 613 L1215 609 L1250 612 L1280 608 L1292 618 L1302 640 L1316 710 Z" fill="url(#pmnt)" filter="url(#b1)"/>
<path d="M1178 624 L1190 614 L1215 610 L1250 613 L1280 609 L1290 618 L1286 634 L1264 630 L1242 640 L1222 630 L1200 638 Z" fill="#c8d0d9" opacity="0.9" filter="url(#b1)"/>
<path d="M1090 706 L1116 676 L1148 658 L1182 680 L1206 706 Z" fill="#74828c" filter="url(#b3)"/>
<!-- forest -->
<path d="M1000.0 700.0 C1000.0 691.7 996.7 658.7 1000.0 650.0 C1003.3 641.3 1013.3 649.0 1020.0 648.0 C1026.7 647.0 1034.7 646.0 1040.0 644.0 C1045.3 642.0 1048.7 638.7 1052.0 636.0 C1055.3 633.3 1057.7 630.8 1060.0 628.0 C1062.3 625.2 1064.0 618.7 1066.0 619.0 C1068.0 619.3 1069.7 626.5 1072.0 630.0 C1074.3 633.5 1077.0 639.3 1080.0 640.0 C1083.0 640.7 1086.8 637.2 1090.0 634.0 C1093.2 630.8 1096.3 621.0 1099.0 621.0 C1101.7 621.0 1103.5 629.8 1106.0 634.0 C1108.5 638.2 1111.0 643.0 1114.0 646.0 C1117.0 649.0 1120.3 649.3 1124.0 652.0 C1127.7 654.7 1131.7 658.0 1136.0 662.0 C1140.3 666.0 1145.3 671.7 1150.0 676.0 C1154.7 680.3 1159.0 684.3 1164.0 688.0 C1169.0 691.7 1175.7 695.0 1180.0 698.0 C1184.3 701.0 1188.3 690.7 1190.0 706.0 C1191.7 721.3 1221.7 776.0 1190.0 790.0 C1158.3 804.0 1031.7 790.0 1000.0 790.0 Z" fill="url(#pfor)" filter="url(#b1)"/>
<g filter="url(#b1)"><ellipse cx="1027.4" cy="683.5" rx="1.6" ry="1.2" fill="#8a8472" opacity="0.37"/><ellipse cx="1012.7" cy="634.9" rx="3.7" ry="2.2" fill="#8a8472" opacity="0.39"/><ellipse cx="1011.4" cy="638.2" rx="2.0" ry="2.5" fill="#8a8472" opacity="0.42"/><ellipse cx="1025.9" cy="676.8" rx="2.9" ry="1.5" fill="#8a8472" opacity="0.65"/><ellipse cx="1040.6" cy="642.6" rx="3.1" ry="2.9" fill="#8a8472" opacity="0.49"/><ellipse cx="1012.8" cy="621.6" rx="4.3" ry="2.6" fill="#8a8472" opacity="0.45"/><ellipse cx="1025.1" cy="655.1" rx="2.3" ry="3.0" fill="#8a8472" opacity="0.56"/><ellipse cx="1013.5" cy="618.8" rx="2.9" ry="1.7" fill="#8a8472" opacity="0.62"/><ellipse cx="1032.5" cy="661.6" rx="2.0" ry="1.3" fill="#8a8472" opacity="0.43"/><ellipse cx="1014.4" cy="680.6" rx="3.0" ry="2.3" fill="#8a8472" opacity="0.70"/><ellipse cx="1014.7" cy="656.5" rx="2.0" ry="2.5" fill="#8a8472" opacity="0.30"/><ellipse cx="1036.9" cy="678.9" rx="4.0" ry="1.2" fill="#8a8472" opacity="0.41"/><ellipse cx="1032.7" cy="625.0" rx="2.9" ry="1.9" fill="#8a8472" opacity="0.68"/><ellipse cx="1027.5" cy="679.7" rx="2.4" ry="2.6" fill="#8a8472" opacity="0.47"/><ellipse cx="1040.7" cy="624.5" rx="4.0" ry="1.4" fill="#8a8472" opacity="0.52"/><ellipse cx="1025.0" cy="629.3" rx="4.0" ry="1.6" fill="#8a8472" opacity="0.42"/><ellipse cx="1007.0" cy="640.0" rx="2.9" ry="2.4" fill="#8a8472" opacity="0.44"/><ellipse cx="1031.5" cy="625.6" rx="2.7" ry="1.9" fill="#8a8472" opacity="0.69"/><ellipse cx="1037.2" cy="665.1" rx="1.5" ry="1.8" fill="#8a8472" opacity="0.58"/><ellipse cx="1013.5" cy="658.6" rx="2.9" ry="1.0" fill="#8a8472" opacity="0.70"/><ellipse cx="1036.0" cy="632.9" rx="3.3" ry="1.6" fill="#8a8472" opacity="0.45"/><ellipse cx="1025.6" cy="639.5" rx="2.5" ry="1.8" fill="#8a8472" opacity="0.57"/><ellipse cx="1014.3" cy="632.4" rx="3.7" ry="1.7" fill="#8a8472" opacity="0.68"/><ellipse cx="1026.5" cy="670.1" rx="2.5" ry="2.7" fill="#8a8472" opacity="0.34"/><ellipse cx="1009.6" cy="624.8" rx="3.5" ry="2.4" fill="#8a8472" opacity="0.37"/><ellipse cx="1020.1" cy="678.3" rx="3.3" ry="1.2" fill="#8a8472" opacity="0.39"/><ellipse cx="1010.3" cy="626.9" rx="2.7" ry="1.1" fill="#8a8472" opacity="0.67"/><ellipse cx="1021.1" cy="654.8" rx="3.4" ry="2.5" fill="#8a8472" opacity="0.63"/><ellipse cx="1019.4" cy="641.9" rx="2.7" ry="1.0" fill="#8a8472" opacity="0.46"/><ellipse cx="1032.0" cy="688.7" rx="3.9" ry="2.3" fill="#8a8472" opacity="0.54"/><ellipse cx="1004.7" cy="641.8" rx="2.5" ry="2.3" fill="#8a8472" opacity="0.34"/><ellipse cx="1019.1" cy="654.7" rx="3.9" ry="2.7" fill="#8a8472" opacity="0.54"/><ellipse cx="1010.3" cy="673.2" rx="4.2" ry="2.1" fill="#8a8472" opacity="0.44"/><ellipse cx="1024.0" cy="628.2" rx="3.6" ry="3.0" fill="#8a8472" opacity="0.51"/><ellipse cx="1032.6" cy="678.2" rx="2.1" ry="2.9" fill="#8a8472" opacity="0.55"/><ellipse cx="1011.9" cy="624.0" rx="2.2" ry="2.2" fill="#8a8472" opacity="0.58"/><ellipse cx="1017.2" cy="684.9" rx="2.6" ry="1.9" fill="#8a8472" opacity="0.35"/><ellipse cx="1042.9" cy="627.8" rx="4.2" ry="2.1" fill="#8a8472" opacity="0.52"/><ellipse cx="1026.4" cy="637.0" rx="4.2" ry="3.0" fill="#8a8472" opacity="0.63"/><ellipse cx="1028.1" cy="626.8" rx="4.0" ry="1.6" fill="#8a8472" opacity="0.66"/></g>
<path d="M1420.0 510.0 C1405.2 510.0 1346.5 507.7 1331.0 510.0 C1315.5 512.3 1328.3 519.0 1327.0 524.0 C1325.7 529.0 1324.0 534.7 1323.0 540.0 C1322.0 545.3 1321.7 550.7 1321.0 556.0 C1320.3 561.3 1319.8 566.7 1319.0 572.0 C1318.2 577.3 1317.8 582.7 1316.0 588.0 C1314.2 593.3 1311.0 599.3 1308.0 604.0 C1305.0 608.7 1301.0 612.3 1298.0 616.0 C1295.0 619.7 1292.3 622.0 1290.0 626.0 C1287.7 630.0 1286.7 635.3 1284.0 640.0 C1281.3 644.7 1277.3 649.7 1274.0 654.0 C1270.7 658.3 1267.3 662.0 1264.0 666.0 C1260.7 670.0 1257.3 674.0 1254.0 678.0 C1250.7 682.0 1247.3 686.3 1244.0 690.0 C1240.7 693.7 1237.0 697.3 1234.0 700.0 C1231.0 702.7 1227.3 691.0 1226.0 706.0 C1224.7 721.0 1193.7 776.0 1226.0 790.0 C1258.3 804.0 1387.7 790.0 1420.0 790.0 Z" fill="url(#pfor2)" filter="url(#roughS)"/>
<g filter="url(#b1)"><ellipse cx="1319.9" cy="689.7" rx="5.3" ry="2.0" fill="#4a4a30" opacity="0.36"/><ellipse cx="1299.5" cy="625.8" rx="2.7" ry="4.0" fill="#4a4a30" opacity="0.48"/><ellipse cx="1371.6" cy="658.3" rx="4.7" ry="3.3" fill="#4a4a30" opacity="0.31"/><ellipse cx="1363.4" cy="716.9" rx="2.1" ry="2.0" fill="#4a4a30" opacity="0.34"/><ellipse cx="1307.7" cy="667.6" rx="4.3" ry="1.9" fill="#4a4a30" opacity="0.36"/><ellipse cx="1322.7" cy="689.0" rx="3.3" ry="3.1" fill="#4a4a30" opacity="0.21"/><ellipse cx="1373.2" cy="639.1" rx="5.8" ry="3.0" fill="#4a4a30" opacity="0.34"/><ellipse cx="1341.0" cy="695.6" rx="4.8" ry="3.4" fill="#4a4a30" opacity="0.43"/><ellipse cx="1350.2" cy="739.4" rx="5.4" ry="3.6" fill="#4a4a30" opacity="0.32"/><ellipse cx="1343.8" cy="688.8" rx="5.6" ry="2.8" fill="#4a4a30" opacity="0.36"/><ellipse cx="1343.6" cy="728.7" rx="3.3" ry="1.6" fill="#4a4a30" opacity="0.42"/><ellipse cx="1401.6" cy="708.4" rx="4.4" ry="3.4" fill="#4a4a30" opacity="0.29"/><ellipse cx="1363.6" cy="630.2" rx="2.5" ry="2.6" fill="#4a4a30" opacity="0.35"/><ellipse cx="1339.2" cy="628.1" rx="4.8" ry="2.8" fill="#4a4a30" opacity="0.27"/><ellipse cx="1328.0" cy="668.7" rx="2.9" ry="1.7" fill="#4a4a30" opacity="0.47"/><ellipse cx="1409.8" cy="700.6" rx="5.5" ry="2.6" fill="#4a4a30" opacity="0.44"/><ellipse cx="1317.5" cy="710.1" rx="4.3" ry="3.8" fill="#4a4a30" opacity="0.23"/><ellipse cx="1388.3" cy="636.6" rx="4.2" ry="3.9" fill="#4a4a30" opacity="0.20"/><ellipse cx="1320.2" cy="657.3" rx="3.3" ry="1.7" fill="#4a4a30" opacity="0.47"/><ellipse cx="1391.1" cy="668.9" rx="3.4" ry="3.0" fill="#4a4a30" opacity="0.21"/><ellipse cx="1293.9" cy="728.0" rx="3.2" ry="2.7" fill="#4a4a30" opacity="0.48"/><ellipse cx="1411.2" cy="677.8" rx="2.8" ry="2.2" fill="#4a4a30" opacity="0.48"/><ellipse cx="1401.2" cy="645.1" rx="5.4" ry="2.4" fill="#4a4a30" opacity="0.34"/><ellipse cx="1311.3" cy="725.8" rx="6.0" ry="2.0" fill="#4a4a30" opacity="0.39"/><ellipse cx="1313.7" cy="725.9" rx="2.2" ry="1.8" fill="#4a4a30" opacity="0.42"/><ellipse cx="1328.8" cy="728.2" rx="5.5" ry="3.3" fill="#4a4a30" opacity="0.24"/><ellipse cx="1376.3" cy="732.7" rx="3.8" ry="1.7" fill="#4a4a30" opacity="0.27"/><ellipse cx="1328.1" cy="705.8" rx="2.8" ry="2.0" fill="#4a4a30" opacity="0.27"/><ellipse cx="1372.4" cy="715.3" rx="3.5" ry="3.2" fill="#4a4a30" opacity="0.47"/><ellipse cx="1363.1" cy="649.0" rx="3.2" ry="3.8" fill="#4a4a30" opacity="0.40"/><ellipse cx="1324.3" cy="697.5" rx="2.4" ry="4.0" fill="#4a4a30" opacity="0.33"/><ellipse cx="1355.5" cy="684.6" rx="2.2" ry="3.0" fill="#4a4a30" opacity="0.29"/><ellipse cx="1321.1" cy="716.8" rx="2.3" ry="2.2" fill="#4a4a30" opacity="0.43"/><ellipse cx="1320.5" cy="654.9" rx="4.2" ry="2.0" fill="#4a4a30" opacity="0.47"/><ellipse cx="1412.5" cy="626.0" rx="3.8" ry="3.4" fill="#4a4a30" opacity="0.32"/><ellipse cx="1405.2" cy="681.0" rx="2.7" ry="2.9" fill="#4a4a30" opacity="0.39"/><ellipse cx="1334.6" cy="699.7" rx="5.1" ry="2.8" fill="#4a4a30" opacity="0.35"/><ellipse cx="1394.8" cy="702.7" rx="4.1" ry="3.9" fill="#4a4a30" opacity="0.25"/><ellipse cx="1386.7" cy="641.5" rx="4.4" ry="2.1" fill="#4a4a30" opacity="0.33"/><ellipse cx="1385.9" cy="714.8" rx="5.2" ry="2.1" fill="#4a4a30" opacity="0.35"/><ellipse cx="1317.4" cy="690.5" rx="4.0" ry="1.6" fill="#4a4a30" opacity="0.38"/><ellipse cx="1378.6" cy="689.6" rx="5.5" ry="2.0" fill="#4a4a30" opacity="0.25"/><ellipse cx="1292.2" cy="680.5" rx="3.7" ry="2.6" fill="#4a4a30" opacity="0.28"/><ellipse cx="1389.0" cy="630.6" rx="5.6" ry="2.9" fill="#4a4a30" opacity="0.36"/><ellipse cx="1388.2" cy="650.1" rx="2.6" ry="2.3" fill="#4a4a30" opacity="0.21"/><ellipse cx="1329.0" cy="695.3" rx="4.1" ry="2.2" fill="#4a4a30" opacity="0.38"/><ellipse cx="1301.0" cy="718.8" rx="2.7" ry="2.1" fill="#4a4a30" opacity="0.25"/><ellipse cx="1375.6" cy="720.0" rx="5.1" ry="1.7" fill="#4a4a30" opacity="0.32"/><ellipse cx="1335.2" cy="647.5" rx="5.9" ry="1.6" fill="#4a4a30" opacity="0.35"/><ellipse cx="1384.4" cy="738.4" rx="2.6" ry="2.6" fill="#4a4a30" opacity="0.42"/><ellipse cx="1294.9" cy="650.4" rx="5.6" ry="1.9" fill="#4a4a30" opacity="0.32"/><ellipse cx="1327.0" cy="672.1" rx="2.3" ry="1.6" fill="#4a4a30" opacity="0.50"/><ellipse cx="1384.6" cy="708.6" rx="2.9" ry="2.1" fill="#4a4a30" opacity="0.37"/><ellipse cx="1320.0" cy="676.5" rx="5.7" ry="2.4" fill="#4a4a30" opacity="0.30"/><ellipse cx="1411.7" cy="694.1" rx="2.2" ry="2.5" fill="#4a4a30" opacity="0.39"/><ellipse cx="1297.3" cy="662.5" rx="4.8" ry="3.7" fill="#4a4a30" opacity="0.38"/><ellipse cx="1399.9" cy="676.6" rx="3.6" ry="3.6" fill="#4a4a30" opacity="0.31"/><ellipse cx="1386.9" cy="647.4" rx="3.4" ry="2.0" fill="#4a4a30" opacity="0.36"/><ellipse cx="1310.3" cy="646.0" rx="2.9" ry="2.7" fill="#4a4a30" opacity="0.29"/><ellipse cx="1345.4" cy="739.2" rx="4.7" ry="3.7" fill="#4a4a30" opacity="0.26"/></g>
<g filter="url(#bs)"><ellipse cx="1354.4" cy="553.1" rx="3.6" ry="1.6" fill="#c3c8c4" opacity="0.55" transform="rotate(-15 1354.4 553.1)"/><ellipse cx="1334.0" cy="550.2" rx="2.8" ry="2.2" fill="#c3c8c4" opacity="0.35" transform="rotate(-32 1334.0 550.2)"/><ellipse cx="1326.9" cy="568.4" rx="2.9" ry="0.9" fill="#c3c8c4" opacity="0.79" transform="rotate(8 1326.9 568.4)"/><ellipse cx="1321.1" cy="551.2" rx="1.2" ry="1.1" fill="#c3c8c4" opacity="0.42" transform="rotate(-48 1321.1 551.2)"/><ellipse cx="1355.3" cy="545.9" rx="3.4" ry="1.7" fill="#c3c8c4" opacity="0.62" transform="rotate(-20 1355.3 545.9)"/><ellipse cx="1395.8" cy="579.7" rx="3.0" ry="1.4" fill="#c3c8c4" opacity="0.41" transform="rotate(-33 1395.8 579.7)"/><ellipse cx="1325.3" cy="565.7" rx="2.1" ry="2.3" fill="#c3c8c4" opacity="0.49" transform="rotate(7 1325.3 565.7)"/><ellipse cx="1389.2" cy="547.7" rx="2.1" ry="0.9" fill="#c3c8c4" opacity="0.61" transform="rotate(-3 1389.2 547.7)"/><ellipse cx="1340.5" cy="524.3" rx="1.9" ry="2.5" fill="#c3c8c4" opacity="0.68" transform="rotate(-43 1340.5 524.3)"/><ellipse cx="1338.7" cy="525.2" rx="1.2" ry="2.2" fill="#c3c8c4" opacity="0.39" transform="rotate(-16 1338.7 525.2)"/><ellipse cx="1354.0" cy="530.6" rx="3.0" ry="1.0" fill="#c3c8c4" opacity="0.62" transform="rotate(-43 1354.0 530.6)"/><ellipse cx="1352.0" cy="532.0" rx="1.8" ry="2.5" fill="#c3c8c4" opacity="0.70" transform="rotate(-32 1352.0 532.0)"/><ellipse cx="1325.6" cy="524.5" rx="2.6" ry="1.2" fill="#c3c8c4" opacity="0.60" transform="rotate(-28 1325.6 524.5)"/><ellipse cx="1354.4" cy="577.5" rx="2.4" ry="1.8" fill="#c3c8c4" opacity="0.73" transform="rotate(-39 1354.4 577.5)"/><ellipse cx="1331.7" cy="574.4" rx="3.3" ry="1.2" fill="#c3c8c4" opacity="0.39" transform="rotate(-6 1331.7 574.4)"/><ellipse cx="1391.5" cy="531.0" rx="3.5" ry="1.9" fill="#c3c8c4" opacity="0.51" transform="rotate(-44 1391.5 531.0)"/><ellipse cx="1322.9" cy="577.7" rx="1.7" ry="2.1" fill="#c3c8c4" opacity="0.43" transform="rotate(-1 1322.9 577.7)"/><ellipse cx="1341.3" cy="575.0" rx="1.6" ry="0.8" fill="#c3c8c4" opacity="0.43" transform="rotate(-23 1341.3 575.0)"/><ellipse cx="1324.6" cy="529.8" rx="2.0" ry="1.8" fill="#c3c8c4" opacity="0.37" transform="rotate(-28 1324.6 529.8)"/><ellipse cx="1387.7" cy="578.8" rx="2.9" ry="1.9" fill="#c3c8c4" opacity="0.37" transform="rotate(-48 1387.7 578.8)"/><ellipse cx="1321.4" cy="574.5" rx="3.0" ry="2.5" fill="#c3c8c4" opacity="0.31" transform="rotate(-12 1321.4 574.5)"/><ellipse cx="1376.0" cy="573.9" rx="3.0" ry="2.2" fill="#c3c8c4" opacity="0.76" transform="rotate(-29 1376.0 573.9)"/><ellipse cx="1372.1" cy="574.0" rx="2.2" ry="2.2" fill="#c3c8c4" opacity="0.73" transform="rotate(-16 1372.1 574.0)"/><ellipse cx="1395.5" cy="572.7" rx="2.1" ry="2.1" fill="#c3c8c4" opacity="0.59" transform="rotate(-24 1395.5 572.7)"/><ellipse cx="1383.7" cy="524.1" rx="1.1" ry="1.9" fill="#c3c8c4" opacity="0.54" transform="rotate(-36 1383.7 524.1)"/><ellipse cx="1342.9" cy="560.4" rx="1.6" ry="1.1" fill="#c3c8c4" opacity="0.75" transform="rotate(-10 1342.9 560.4)"/><ellipse cx="1353.6" cy="573.4" rx="1.9" ry="2.0" fill="#c3c8c4" opacity="0.40" transform="rotate(-24 1353.6 573.4)"/><ellipse cx="1381.3" cy="574.8" rx="2.1" ry="1.8" fill="#c3c8c4" opacity="0.46" transform="rotate(-42 1381.3 574.8)"/><ellipse cx="1357.7" cy="570.1" rx="3.0" ry="2.5" fill="#c3c8c4" opacity="0.44" transform="rotate(-40 1357.7 570.1)"/><ellipse cx="1354.2" cy="535.8" rx="1.6" ry="1.5" fill="#c3c8c4" opacity="0.61" transform="rotate(-20 1354.2 535.8)"/><ellipse cx="1344.0" cy="570.2" rx="3.7" ry="1.6" fill="#c3c8c4" opacity="0.34" transform="rotate(-48 1344.0 570.2)"/><ellipse cx="1386.3" cy="521.5" rx="2.6" ry="1.4" fill="#c3c8c4" opacity="0.70" transform="rotate(-49 1386.3 521.5)"/><ellipse cx="1330.3" cy="546.7" rx="1.1" ry="2.3" fill="#c3c8c4" opacity="0.42" transform="rotate(-42 1330.3 546.7)"/><ellipse cx="1323.6" cy="557.4" rx="2.3" ry="1.9" fill="#c3c8c4" opacity="0.63" transform="rotate(-2 1323.6 557.4)"/><ellipse cx="1355.9" cy="562.6" rx="1.5" ry="1.3" fill="#c3c8c4" opacity="0.47" transform="rotate(-8 1355.9 562.6)"/><ellipse cx="1359.6" cy="556.5" rx="2.1" ry="2.2" fill="#c3c8c4" opacity="0.75" transform="rotate(-45 1359.6 556.5)"/><ellipse cx="1354.5" cy="557.2" rx="3.5" ry="1.5" fill="#c3c8c4" opacity="0.58" transform="rotate(3 1354.5 557.2)"/><ellipse cx="1369.5" cy="531.5" rx="3.3" ry="2.0" fill="#c3c8c4" opacity="0.66" transform="rotate(-37 1369.5 531.5)"/><ellipse cx="1388.4" cy="578.8" rx="2.5" ry="2.2" fill="#c3c8c4" opacity="0.46" transform="rotate(5 1388.4 578.8)"/><ellipse cx="1353.5" cy="552.6" rx="3.2" ry="1.7" fill="#c3c8c4" opacity="0.31" transform="rotate(-1 1353.5 552.6)"/><ellipse cx="1324.9" cy="567.8" rx="1.5" ry="1.4" fill="#c3c8c4" opacity="0.69" transform="rotate(-42 1324.9 567.8)"/><ellipse cx="1331.3" cy="550.5" rx="3.0" ry="2.3" fill="#c3c8c4" opacity="0.64" transform="rotate(7 1331.3 550.5)"/><ellipse cx="1336.8" cy="551.1" rx="1.8" ry="2.1" fill="#c3c8c4" opacity="0.62" transform="rotate(-19 1336.8 551.1)"/><ellipse cx="1349.0" cy="570.6" rx="3.5" ry="1.2" fill="#c3c8c4" opacity="0.73" transform="rotate(8 1349.0 570.6)"/><ellipse cx="1322.1" cy="578.1" rx="2.4" ry="1.5" fill="#c3c8c4" opacity="0.70" transform="rotate(-16 1322.1 578.1)"/><ellipse cx="1360.9" cy="544.2" rx="3.6" ry="1.3" fill="#c3c8c4" opacity="0.54" transform="rotate(-42 1360.9 544.2)"/><ellipse cx="1353.0" cy="568.8" rx="3.5" ry="1.7" fill="#c3c8c4" opacity="0.46" transform="rotate(-39 1353.0 568.8)"/><ellipse cx="1337.3" cy="560.9" rx="1.9" ry="1.4" fill="#c3c8c4" opacity="0.61" transform="rotate(-44 1337.3 560.9)"/><ellipse cx="1339.0" cy="531.1" rx="2.5" ry="1.6" fill="#c3c8c4" opacity="0.49" transform="rotate(-25 1339.0 531.1)"/><ellipse cx="1384.7" cy="556.3" rx="1.7" ry="2.1" fill="#c3c8c4" opacity="0.71" transform="rotate(4 1384.7 556.3)"/><ellipse cx="1344.0" cy="538.2" rx="3.6" ry="1.2" fill="#c3c8c4" opacity="0.80" transform="rotate(3 1344.0 538.2)"/><ellipse cx="1330.2" cy="533.6" rx="3.0" ry="1.3" fill="#c3c8c4" opacity="0.35" transform="rotate(-0 1330.2 533.6)"/><ellipse cx="1352.0" cy="567.2" rx="1.4" ry="1.5" fill="#c3c8c4" opacity="0.64" transform="rotate(-49 1352.0 567.2)"/><ellipse cx="1335.3" cy="560.6" rx="3.6" ry="2.5" fill="#c3c8c4" opacity="0.36" transform="rotate(-20 1335.3 560.6)"/><ellipse cx="1377.6" cy="549.7" rx="1.5" ry="0.9" fill="#c3c8c4" opacity="0.35" transform="rotate(-48 1377.6 549.7)"/><ellipse cx="1331.1" cy="530.3" rx="1.6" ry="2.3" fill="#c3c8c4" opacity="0.80" transform="rotate(6 1331.1 530.3)"/><ellipse cx="1327.2" cy="522.8" rx="3.7" ry="1.6" fill="#c3c8c4" opacity="0.68" transform="rotate(-30 1327.2 522.8)"/><ellipse cx="1355.5" cy="550.4" rx="2.2" ry="1.9" fill="#c3c8c4" opacity="0.31" transform="rotate(-8 1355.5 550.4)"/><ellipse cx="1332.5" cy="550.3" rx="1.0" ry="2.4" fill="#c3c8c4" opacity="0.70" transform="rotate(-8 1332.5 550.3)"/><ellipse cx="1365.6" cy="549.8" rx="3.3" ry="1.3" fill="#c3c8c4" opacity="0.76" transform="rotate(-5 1365.6 549.8)"/><ellipse cx="1388.1" cy="572.7" rx="3.1" ry="2.2" fill="#c3c8c4" opacity="0.50" transform="rotate(-7 1388.1 572.7)"/><ellipse cx="1325.4" cy="539.8" rx="2.3" ry="0.8" fill="#c3c8c4" opacity="0.48" transform="rotate(-12 1325.4 539.8)"/><ellipse cx="1367.4" cy="533.2" rx="2.9" ry="1.4" fill="#c3c8c4" opacity="0.63" transform="rotate(-16 1367.4 533.2)"/><ellipse cx="1360.5" cy="542.8" rx="2.8" ry="2.1" fill="#c3c8c4" opacity="0.68" transform="rotate(9 1360.5 542.8)"/><ellipse cx="1321.7" cy="556.5" rx="3.1" ry="1.3" fill="#c3c8c4" opacity="0.50" transform="rotate(-47 1321.7 556.5)"/><ellipse cx="1334.9" cy="541.9" rx="1.3" ry="1.3" fill="#c3c8c4" opacity="0.75" transform="rotate(-17 1334.9 541.9)"/><ellipse cx="1395.6" cy="557.9" rx="1.2" ry="1.9" fill="#c3c8c4" opacity="0.68" transform="rotate(-47 1395.6 557.9)"/><ellipse cx="1332.9" cy="549.2" rx="2.7" ry="0.9" fill="#c3c8c4" opacity="0.77" transform="rotate(-25 1332.9 549.2)"/><ellipse cx="1341.7" cy="559.0" rx="2.6" ry="1.3" fill="#c3c8c4" opacity="0.66" transform="rotate(-32 1341.7 559.0)"/><ellipse cx="1321.1" cy="533.9" rx="1.1" ry="1.1" fill="#c3c8c4" opacity="0.68" transform="rotate(-27 1321.1 533.9)"/><ellipse cx="1328.7" cy="557.1" rx="2.3" ry="1.2" fill="#c3c8c4" opacity="0.33" transform="rotate(-18 1328.7 557.1)"/><ellipse cx="1329.4" cy="546.0" rx="2.9" ry="1.6" fill="#c3c8c4" opacity="0.43" transform="rotate(-15 1329.4 546.0)"/><ellipse cx="1351.9" cy="566.5" rx="2.5" ry="2.6" fill="#c3c8c4" opacity="0.78" transform="rotate(-6 1351.9 566.5)"/><ellipse cx="1338.1" cy="525.9" rx="3.5" ry="2.2" fill="#c3c8c4" opacity="0.61" transform="rotate(-28 1338.1 525.9)"/><ellipse cx="1340.6" cy="560.8" rx="2.6" ry="1.9" fill="#c3c8c4" opacity="0.62" transform="rotate(-5 1340.6 560.8)"/><ellipse cx="1334.4" cy="534.2" rx="3.7" ry="2.4" fill="#c3c8c4" opacity="0.74" transform="rotate(-48 1334.4 534.2)"/><ellipse cx="1324.6" cy="535.5" rx="2.2" ry="1.9" fill="#c3c8c4" opacity="0.35" transform="rotate(-18 1324.6 535.5)"/><ellipse cx="1325.5" cy="524.3" rx="2.9" ry="1.8" fill="#c3c8c4" opacity="0.62" transform="rotate(-28 1325.5 524.3)"/><ellipse cx="1329.1" cy="568.4" rx="2.7" ry="2.2" fill="#c3c8c4" opacity="0.41" transform="rotate(-25 1329.1 568.4)"/><ellipse cx="1339.6" cy="568.4" rx="2.0" ry="2.0" fill="#c3c8c4" opacity="0.79" transform="rotate(-30 1339.6 568.4)"/><ellipse cx="1361.7" cy="564.5" rx="2.2" ry="1.5" fill="#c3c8c4" opacity="0.35" transform="rotate(3 1361.7 564.5)"/><ellipse cx="1326.0" cy="524.1" rx="2.6" ry="1.7" fill="#c3c8c4" opacity="0.64" transform="rotate(-32 1326.0 524.1)"/><ellipse cx="1330.9" cy="540.8" rx="3.0" ry="1.5" fill="#c3c8c4" opacity="0.36" transform="rotate(-7 1330.9 540.8)"/><ellipse cx="1363.3" cy="575.0" rx="3.6" ry="1.6" fill="#c3c8c4" opacity="0.70" transform="rotate(-32 1363.3 575.0)"/><ellipse cx="1344.1" cy="543.4" rx="3.6" ry="2.4" fill="#c3c8c4" opacity="0.42" transform="rotate(-28 1344.1 543.4)"/><ellipse cx="1347.8" cy="541.2" rx="2.1" ry="1.5" fill="#c3c8c4" opacity="0.40" transform="rotate(-16 1347.8 541.2)"/><ellipse cx="1380.6" cy="552.0" rx="2.6" ry="1.1" fill="#c3c8c4" opacity="0.68" transform="rotate(3 1380.6 552.0)"/><ellipse cx="1341.4" cy="520.4" rx="2.4" ry="1.8" fill="#c3c8c4" opacity="0.58" transform="rotate(8 1341.4 520.4)"/><ellipse cx="1326.2" cy="564.0" rx="3.5" ry="1.0" fill="#c3c8c4" opacity="0.62" transform="rotate(-41 1326.2 564.0)"/><ellipse cx="1336.8" cy="565.7" rx="2.5" ry="2.2" fill="#c3c8c4" opacity="0.50" transform="rotate(-30 1336.8 565.7)"/><ellipse cx="1360.8" cy="563.0" rx="3.6" ry="1.5" fill="#c3c8c4" opacity="0.71" transform="rotate(-10 1360.8 563.0)"/><ellipse cx="1384.9" cy="568.2" rx="3.5" ry="2.5" fill="#c3c8c4" opacity="0.62" transform="rotate(-19 1384.9 568.2)"/><ellipse cx="1352.0" cy="527.9" rx="3.1" ry="2.6" fill="#c3c8c4" opacity="0.49" transform="rotate(-40 1352.0 527.9)"/><ellipse cx="1335.5" cy="544.9" rx="1.8" ry="2.5" fill="#c3c8c4" opacity="0.33" transform="rotate(-31 1335.5 544.9)"/><ellipse cx="1328.7" cy="558.5" rx="3.2" ry="1.1" fill="#c3c8c4" opacity="0.33" transform="rotate(-22 1328.7 558.5)"/></g>
<rect x="1004" y="704" width="410" height="66" fill="#171e1e"/>
<path d="M1004 694 L1160 694 L1200 708 L1240 704 L1414 694 L1414 710 L1004 710 Z" fill="#171e1e" filter="url(#b3)"/>
<g><path d="M1350 700 L1349.3 790" stroke="#34382f" stroke-width="1.2" opacity="0.45"/><path d="M1368 690 L1365.4 800" stroke="#34382f" stroke-width="1.4" opacity="0.45"/><path d="M1388 680 L1389.1 805" stroke="#34382f" stroke-width="1.5" opacity="0.45"/><path d="M1402 700 L1401.2 812" stroke="#34382f" stroke-width="1.2" opacity="0.45"/><path d="M1335 710 L1333.6 780" stroke="#34382f" stroke-width="1" opacity="0.45"/><path d="M1030 700 L1027.1 770" stroke="#34382f" stroke-width="1" opacity="0.45"/><path d="M1050 705 L1048.1 772" stroke="#34382f" stroke-width="1" opacity="0.45"/><path d="M1080 705 L1078.6 770" stroke="#34382f" stroke-width="1" opacity="0.45"/><path d="M1110 710 L1109.4 768" stroke="#34382f" stroke-width="0.9" opacity="0.45"/></g>
<!-- centre bushes -->
<ellipse cx="1216" cy="724" rx="42" ry="22" fill="#353d2d" filter="url(#b6)"/>
<ellipse cx="1254" cy="716" rx="9" ry="14" fill="#5b5a30" opacity="0.6" filter="url(#b3)"/>
<ellipse cx="1168" cy="714" rx="8" ry="12" fill="#4a4a2a" opacity="0.6" filter="url(#b3)"/>
<ellipse cx="1216" cy="752" rx="34" ry="8" fill="#262d28" filter="url(#b3)"/>
<!-- ground -->
<path d="M1004 770 L1200 759 L1262 759 L1414 784 L1414 824 L1004 824 Z" fill="#474c3a"/>
<path d="M1004 774 L1120 767 L1200 761 L1212 762 L1060 802 L1004 808 Z" fill="#4c5236" filter="url(#b1)"/>
<path d="M1264 761 L1414 800 L1414 824 L1384 824 Z" fill="#56574f"/>
<path d="M1266 760 L1414 778 L1414 806 Z" fill="#23282a" filter="url(#b1)"/>
<!-- road -->
<path d="M1226 762 L1254 762 L1374 824 L1004 824 L1004 812 Z" fill="url(#proad)"/>
<path d="M1222 763 L1004 806 L1004 818 L1225 764 Z" fill="#2c2f31"/>
<path d="M1228.500 762 L1006 823" stroke="#e9ebe8" stroke-width="1.500" fill="none"/>
<path d="M1251 763 L1332 824" stroke="#f2f3f0" stroke-width="2" fill="none"/>
<path d="M1254 763 L1352 824 L1374 824 L1258 763 Z" fill="#383b3d"/>
<g stroke="#f3f4f0" fill="none" stroke-linecap="butt">
<path d="M1228 765 L1226 768" stroke-width="0.800"/>
<path d="M1224 770 L1219 776" stroke-width="1.100"/>
<path d="M1216 778 L1210 783.500" stroke-width="1.500"/>
<path d="M1208 785 L1197.500 793.500" stroke-width="2.100"/>
<path d="M1194 797 L1163 824" stroke-width="3"/>
</g>
<g stroke="#8a8f80" fill="none"><path d="M1190 792 L1176 804" stroke-width="1.600"/><path d="M1168 812 L1154 824" stroke-width="2.400"/></g>
<path d="M1208 760 L1211 758 L1211 761 Z M1258 758 L1261 760 L1258 761 Z" fill="#a8aca8"/>
</g>
<g filter="url(#bs)">
<ellipse cx="957" cy="928.5" rx="34" ry="11.500" transform="rotate(26 957 928.500)" fill="#65483f"/>
<ellipse cx="914" cy="927.500" rx="13.500" ry="8.500" transform="rotate(14 914 927.500)" fill="#66493f"/>
<path d="M950 935 C962 940 974 944 986 943" stroke="#d8601e" stroke-width="1.600" fill="none" opacity="0.9"/>
<path d="M886.500 922 C888 916 894 912.500 901 911 C904 906 912 903 920 902.500 C928 901 938 901.500 944 903.500 C946.500 905.500 945 909 940 910.500 C934 913 928 916 922 919 C914 923 904 927.500 896 929.500 C891 930 886.500 927 886.500 922 Z" fill="#f8edc8"/>
<path d="M904 909 C912 904 926 902 940 904.500 C934 909 924 912 914 912.500 Z" fill="#fffbe8"/>
<path d="M888 920 L908 912.500 M889 924 L912 915 M893 927.500 L916 918.500" stroke="#d8a820" stroke-width="1.400" fill="none"/>
<path d="M914 905 L920 912 M922 903.500 L926 910" stroke="#c8902a" stroke-width="0.900" fill="none"/>
</g>
<g filter="url(#bs)">
<path d="M1315.500 957 C1313 941 1324 928 1338 920 C1349 914 1361 910.500 1371 912.500 L1370.500 916.500 C1363 917.500 1357 921 1353 929 C1351 940 1347 952 1341 960 Z" fill="#573c35"/>
<path d="M1321 958 C1325 946 1333 937 1343 931 L1352.500 929 C1352.500 939 1348.500 950 1342 958.500 Z" fill="#fffdf6"/>
<path d="M1328 948 L1350 933 M1330 952 L1351 939 M1334 956 L1349 946" stroke="#b8642a" stroke-width="1.200" fill="none"/>
<path d="M1362 914 L1371 915.500" stroke="#e0603a" stroke-width="1.400" fill="none"/>
<path d="M1266 963.500 C1280 959.500 1296 956 1312 955 C1324 956 1340 959 1358 964.500 L1358 974.500 C1354 977.500 1346 977 1342 973 C1340 971 1338 969.500 1334 969.500 C1322 970 1308 967.500 1296 966 C1286 965 1276 964.500 1266 963.500 Z" fill="#5c443c"/>
<path d="M1272 962.500 C1286 958.500 1300 955.500 1314 955 C1326 956.500 1340 959.500 1356 964 C1344 964.500 1330 963.500 1318 962 C1304 961 1288 962 1272 962.500 Z" fill="#fffef8"/>
</g></svg>
<div style="left:926.6px;top:577px;width:510.6px;height:40px;background:rgba(255,255,255,0.875);border-radius:9px;box-shadow:0 1px 6px rgba(0,0,0,0.12)"></div>
<div style="left:940.4px;top:586.6px;width:20.6px;height:20.6px;background:#000;border-radius:6.5px"></div>
<span class="t" style="left:969.36px;top:589.85px;font-size:15px;line-height:15px;transform:scaleX(0.9427);-webkit-text-stroke:0.18px #222;">Fill color</span>
<svg style="left:1048px;top:587.5px;" width="21" height="19" viewBox="0 0 21 19"><path class="ic" d="M1.8 3.8 V1.8 H9 V3.8 M5.4 2 V9.2 M3.6 9.4 H7.2" stroke-width="1.7"/><path class="ic" d="M12.4 2 H18.6 M12.4 5.8 H18.6 M1.8 13.4 H9 M1.8 17 H9" stroke-width="1.8"/><rect class="ic" x="12.6" y="10" width="5.6" height="7.4" rx="2.6" stroke-width="1.8"/></svg>
<span class="t" style="left:1077.60px;top:589.85px;font-size:15px;line-height:15px;transform:scaleX(0.9209);-webkit-text-stroke:0.18px #222;">Text layout</span>
<svg style="left:1169.5px;top:586.4px;" width="22" height="22" viewBox="0 0 22 22"><path class="ic" d="M10 4 C5.4 4 1.8 7.6 1.8 12.2 C1.8 16.8 5.4 20.4 10 20.4 C11.8 20.4 12.6 19.4 12.6 18.2 C12.6 17.2 12 16.6 12 15.6 C12 14.4 13 13.6 14.4 13.6 L15.6 13.6 C16.8 13.6 17.8 13.2 18.2 12" stroke-width="1.9"/><path class="ic" d="M17 1.4 L17.9 4 L20.6 5 L17.9 6 L17 8.6 L16 6 L13.4 5 L16 4 Z" stroke-width="1.3"/><path d="M11.4 6.8 L12 8.4 L13.6 9 L12 9.6 L11.4 11.2 L10.8 9.6 L9.2 9 L10.8 8.4 Z" fill="#222"/><circle cx="6" cy="10.4" r="1.1" fill="#222"/><circle cx="5.8" cy="14.6" r="1.1" fill="#222"/><circle cx="8.8" cy="17" r="1.1" fill="#222"/></svg>
<span class="t" style="left:1199.40px;top:589.85px;font-size:15px;line-height:15px;transform:scaleX(0.9476);-webkit-text-stroke:0.18px #222;">Outline color</span>
<svg style="left:1300px;top:586.4px;" width="22" height="22" viewBox="0 0 22 22"><path class="ic" d="M3.4 20 L4.8 14.6 L14.6 4.8 C15.8 3.6 17.4 3.6 18.6 4.8 C19.8 6 19.8 7.6 18.6 8.8 L8.8 18.6 Z M4.8 14.8 L8.6 18.6 M15.6 2.6 C17.6 1.8 19.8 3 20.4 5" stroke-width="1.8"/><path class="ic" d="M8 1.4 L8.8 3.6 L11 4.4 L8.8 5.2 L8 7.4 L7.2 5.2 L5 4.4 L7.2 3.6 Z" stroke-width="1.2"/><path d="M3.2 6.6 L3.8 8 L5.2 8.6 L3.8 9.2 L3.2 10.6 L2.6 9.2 L1.2 8.6 L2.6 8 Z" fill="#222"/></svg>
<svg style="left:1336.6px;top:587px;" width="20" height="20" viewBox="0 0 20 20"><path class="ic" d="M8.6 11.4 C10 12.8 12.2 12.8 13.6 11.4 L17 8 C18.4 6.600 18.4 4.400 17 3 C15.600 1.600 13.400 1.600 12 3 L10.8 4.2 M11.4 8.600 C10 7.200 7.800 7.200 6.400 8.600 L3 12 C1.600 13.400 1.600 15.600 3 17 C4.400 18.400 6.600 18.400 8 17 L9.2 15.800" stroke-width="2"/></svg>
<svg style="left:1371.6px;top:586.2px;" width="21" height="22" viewBox="0 0 21 22"><path class="ic" d="M1.6 5.4 H19.4 M7 5.2 V3.6 C7 2.400 7.800 1.600 9 1.600 H12 C13.200 1.600 14 2.400 14 3.600 V5.200 M3.600 5.600 V17 C3.600 19 4.800 20.200 6.800 20.200 H14.200 C16.200 20.200 17.400 19 17.400 17 V5.600 M8.400 9.600 V15.600 M12.600 9.600 V15.600" stroke-width="2"/></svg>
<svg style="left:1408px;top:594.6px;" width="19" height="5" viewBox="0 0 19 5"><circle cx="2.4" cy="2.300" r="1.900" fill="#222"/><circle cx="9.400" cy="2.300" r="1.900" fill="#222"/><circle cx="16.400" cy="2.300" r="1.900" fill="#222"/></svg>
<span class="t" style="left:970.79px;top:641.41px;font-size:53.4px;line-height:53.4px;color:#000;transform:scaleX(1.1028);-webkit-text-stroke:1.4px #000;word-spacing:-5.5px;">Birds &amp; Blue Sky</span>
<svg style="left:0;top:0;pointer-events:none" width="1920" height="1200" viewBox="0 0 1920 1200"><g fill="none" stroke="#5258e4" stroke-width="2.2">
<path d="M968.8 637.6 H1396.2 M968.8 699.300 H1396.200 M968.800 637.600 V699.300 M1396.200 637.600 V699.300"/>
<circle cx="968.8" cy="637.6" r="6.300" fill="#fff"/><circle cx="968.8" cy="699.300" r="6.300" fill="#fff"/>
<circle cx="1396.2" cy="637.6" r="6.300" fill="#fff"/><circle cx="1396.2" cy="699.300" r="6.300" fill="#fff"/>
<rect x="965.3" y="656.6" width="7" height="24" rx="3.500" fill="#fff"/>
<rect x="1391.600" y="656.600" width="9.200" height="24.400" rx="4.600" fill="#5258e4"/>
</g>
<circle cx="1182.5" cy="732.3" r="15.400" fill="#5258e4"/>
<path d="M1175.600 731.800 C1175.900 728 1178.900 725.400 1182.600 725.400 C1186.500 725.400 1189.600 728.500 1189.600 732.400 C1189.600 736.300 1186.500 739.400 1182.600 739.400 C1180.400 739.400 1178.500 738.400 1177.200 736.800 M1174.800 726.200 V731.200 H1179.800" fill="none" stroke="#fff" stroke-width="2" stroke-linecap="round" stroke-linejoin="round"/></svg>
</main>
<section class="g pages">
<div style="left:1808.4px;top:175.2px;width:81.2px;height:81.4px;background:#fff;border:2.6px solid #0a0a0a;border-radius:9px"></div>
<span class="t" style="left:1817.80px;top:211.34px;font-size:7.6px;line-height:7.6px;font-weight:700;color:#333;transform:scaleX(0.9908);">Birds &amp; Blue Sky</span>
<div style="left:1810.3px;top:266.2px;width:77.2px;height:77.2px;background:#fff;border-radius:7px;box-shadow:0 0 0 1px rgba(0,0,0,0.05),0 1px 4px rgba(0,0,0,0.12);"></div>
<div style="left:1810.3px;top:355px;width:77.2px;height:77.2px;background:#fff;border-radius:7px;box-shadow:0 0 0 1px rgba(0,0,0,0.05),0 1px 4px rgba(0,0,0,0.12);"></div>
<div style="left:1810.3px;top:443.8px;width:77.2px;height:77.2px;background:#fff;border-radius:7px;box-shadow:0 0 0 1px rgba(0,0,0,0.05),0 1px 4px rgba(0,0,0,0.12);"></div>
<div style="left:1810.3px;top:532.8px;width:77.2px;height:77.2px;background:#fff;border-radius:7px;box-shadow:0 0 0 1px rgba(0,0,0,0.05),0 1px 4px rgba(0,0,0,0.12);"></div>
<svg style="left:1831.7px;top:380.8px" width="34.2" height="25.6" viewBox="0 0 34.2 25.6">
<defs><linearGradient id="t3s" x1="0" y1="0" x2="1" y2="0"><stop offset="0" stop-color="#b9c4cc"/><stop offset="0.6" stop-color="#e6e0d4"/><stop offset="1" stop-color="#cfcabc"/></linearGradient>
<filter id="t3b"><feGaussianBlur stdDeviation="0.5"/></filter></defs>
<rect width="34.2" height="25.6" fill="url(#t3s)"/>
<g filter="url(#t3b)">
<path d="M10 16 L17 6.500 L24 16 Z" fill="#6f8196"/>
<path d="M0 3 C3 0 10 0 13 4 L12 10 L9 13 L6 16 L0 17 Z" fill="#4a4f4c"/>
<path d="M27 0 L34.2 0 L34.2 18 L24 18 L26 12 L28 7 Z" fill="#23282a"/>
<path d="M0 11 L8 12 L14 15 L20 15 L26 13 L34.2 12 L34.200 25.600 L0 25.600 Z" fill="#1c2324"/>
<path d="M0 22 L15 19 L19 19 L34.200 23 L34.200 25.600 L0 25.600 Z" fill="#3b3f40"/>
</g></svg>
<svg style="left:1818.3px;top:458.8px" width="61" height="47" viewBox="0 0 61 47">
<defs>
<linearGradient id="t4a" x1="0" y1="0" x2="1" y2="0"><stop offset="0" stop-color="#3a2ab0"/><stop offset="0.14" stop-color="#2d8fd8"/><stop offset="0.24" stop-color="#29b8a8"/><stop offset="0.34" stop-color="#e8a048"/><stop offset="0.5" stop-color="#fdbb2c"/><stop offset="0.72" stop-color="#fba126"/><stop offset="0.88" stop-color="#f7602c"/><stop offset="1" stop-color="#e8287a"/></linearGradient>
<linearGradient id="t4b" x1="0" y1="0" x2="0" y2="1"><stop offset="0" stop-color="#ff2a9a" stop-opacity="0"/><stop offset="0.45" stop-color="#f03a8a" stop-opacity="0.25"/><stop offset="0.62" stop-color="#ff2ab0" stop-opacity="0.95"/><stop offset="0.8" stop-color="#8a1ab0"/><stop offset="1" stop-color="#2a2a9a"/></linearGradient>
<linearGradient id="t4c" x1="0" y1="0" x2="1" y2="0"><stop offset="0" stop-color="#6a1ab0" stop-opacity="0.9"/><stop offset="0.3" stop-color="#3a3ab0" stop-opacity="0"/><stop offset="0.7" stop-color="#3a3ab0" stop-opacity="0"/><stop offset="1" stop-color="#c01a9a" stop-opacity="0.8"/></linearGradient>
<filter id="t4f"><feGaussianBlur stdDeviation="0.6"/></filter>
<clipPath id="t4clip"><rect width="61" height="47"/></clipPath>
</defs>
<g clip-path="url(#t4clip)">
<rect width="61" height="47" fill="url(#t4a)"/>
<rect width="61" height="47" fill="url(#t4c)"/>
<rect width="61" height="47" fill="url(#t4b)"/>
<g filter="url(#t4f)">
<path d="M30.500 28 L24 47 L27.500 47 Z M30.500 28 L30 47 L32 47 Z M30.500 28 L34 47 L37.500 47 Z" fill="#ff8a2a"/>
<path d="M30.500 28 L10 47 L16 47 Z M30.500 28 L46 47 L52 47 Z" fill="#ff5a3a" opacity="0.8"/>
<path d="M0 31 L30 28.500 L0 35 Z M61 31 L31 28.500 L61 36 Z" fill="#ffb03a" opacity="0.85"/>
<path d="M0 6 L22 22 L0 14 Z M0 16 L24 25 L0 22 Z" fill="#29c8e8" opacity="0.55"/>
<path d="M61 10 L40 24 L61 20 Z" fill="#a03ae0" opacity="0.5"/>
</g></g></svg>
<svg style="left:1823.3px;top:545.8px" width="51" height="51" viewBox="0 0 51 51">
<defs><filter id="t5f"><feGaussianBlur stdDeviation="0.8"/></filter></defs>
<rect width="51" height="51" fill="#4a5cfb"/>
<g filter="url(#t5f)">
<path d="M0 27 C2 23 7 22 10 21 C12 17 16 15 19 14 C21 10 26 9 30 9 C34 9 35 13 36 16 C40 15 45 16 48 20 C50 23 51 26 51 28 L51 33 C46 35 40 36 36 38 C30 39 24 37 18 35 C12 35 4 33 0 30 Z" fill="#fff"/>
<path d="M20 36 C28 38 38 38 46 34 L46 37 C38 41 28 40 20 38 Z" fill="#c8d0fa"/>
</g>
<path d="M7 39.500 L10 39 L11 40.200 Z M30 41 L32.500 39 L33 41.500 Z" fill="#e8dcc0"/>
</svg>
<div style="left:1856.7px;top:579px;width:27.6px;height:27.6px;background:#1d1d1d;border-radius:50%"></div>
<svg style="left:1862.6px;top:585.2px" width="16" height="15.4" viewBox="0 0 16 15.4">
<defs><clipPath id="bdc"><rect x="1.2" y="1.200" width="13.600" height="13" rx="3.400"/></clipPath></defs>
<g clip-path="url(#bdc)" stroke="#fff" stroke-width="2.300"><path d="M-3 9 L9 -3 M-1 14.500 L14.500 -1 M4 17 L18 3 M10 18 L20 8"/></g>
<rect x="1.1" y="1.100" width="13.800" height="13.200" rx="3.600" fill="none" stroke="#fff" stroke-width="1.700"/></svg>
<div style="left:1828.5px;top:629.8px;width:40.6px;height:40.6px;background:#fff;border-radius:50%;box-shadow:0 2px 10px rgba(0,0,0,0.10)"></div>
<svg style="left:1841.8px;top:643px;" width="14.4" height="14.4" viewBox="0 0 14.4 14.4"><path class="ic" d="M1.4 1.400 L13 13 M13 1.400 L1.400 13" stroke-width="2.300" style="stroke:#111"/></svg>
<div style="left:528.1px;top:1139px;width:40.6px;height:40.6px;background:#fff;border-radius:50%;box-shadow:0 2px 10px rgba(0,0,0,0.13);"></div>
<svg style="left:540px;top:1149.5px;" width="19" height="19.6" viewBox="0 0 19 19.6"><path d="M3.400 1.600 L15.600 8 C17.200 8.900 17.200 10.700 15.600 11.600 L3.400 18 C2.200 18.600 1.200 18 1.200 16.600 V3 C1.200 1.600 2.200 1 3.400 1.600 Z" fill="#222"/></svg>
<div style="left:578.7px;top:1139px;width:139.4px;height:40.6px;background:#fff;border-radius:21px;box-shadow:0 2px 10px rgba(0,0,0,0.13);"></div>
<span class="t" style="left:599.35px;top:1152.22px;font-size:16.8px;line-height:16.8px;font-weight:700;color:#111;transform:scaleX(0.9475);">Edit Timeline</span>
<div style="left:1727.5px;top:1134px;width:40.6px;height:40.6px;background:#fff;border-radius:50%;box-shadow:0 2px 10px rgba(0,0,0,0.13);"></div>
<svg style="left:1737.6px;top:1151.6px;" width="21" height="5.4" viewBox="0 0 21 5.4"><circle cx="2.700" cy="2.700" r="2.400" fill="#222"/><circle cx="10.300" cy="2.700" r="2.400" fill="#222"/><circle cx="18.100" cy="2.700" r="2.400" fill="#222"/></svg>
<div style="left:1778.4px;top:1134px;width:111px;height:40.6px;background:#fff;border-radius:21px;box-shadow:0 2px 10px rgba(0,0,0,0.13);"></div>
<span class="t" style="left:1799.20px;top:1146.25px;font-size:17px;line-height:17px;color:#111;transform:scaleX(0.9608);-webkit-text-stroke:0.55px #111;">Add page</span>
</section>
</div>
</body>
</html>
